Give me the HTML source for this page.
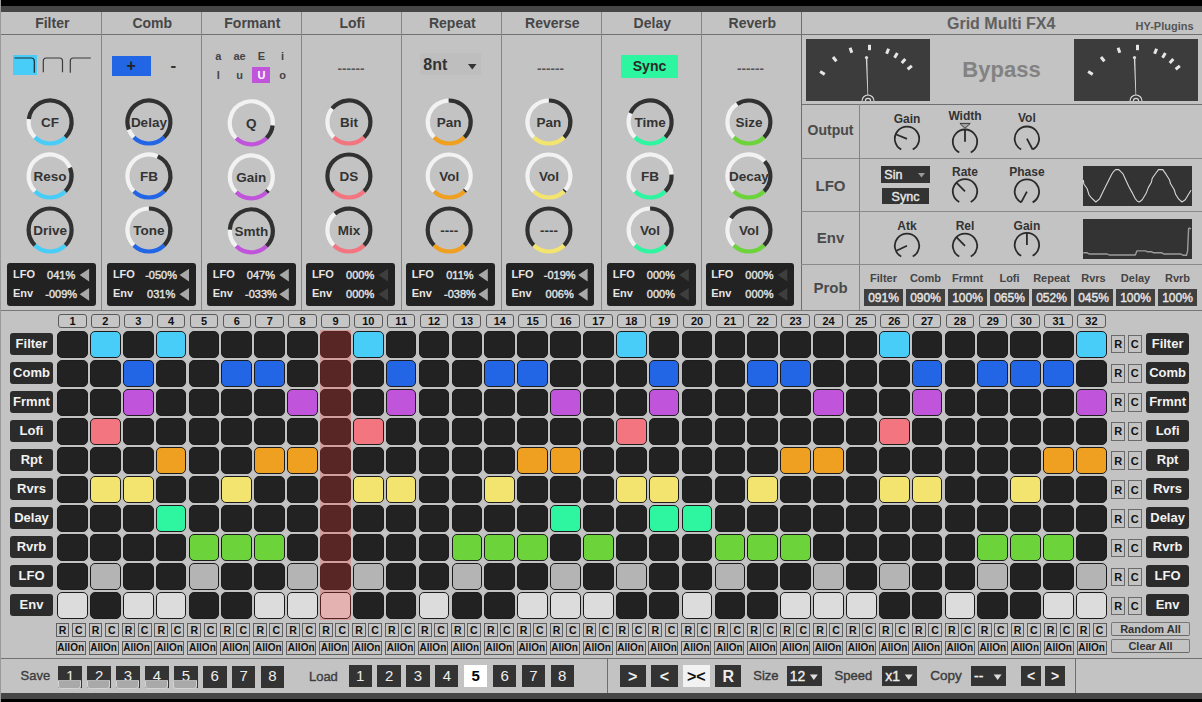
<!DOCTYPE html><html><head><meta charset="utf-8"><style>
*{box-sizing:border-box}
html,body{margin:0;padding:0}
body{width:1202px;height:702px;overflow:hidden;background:#c3c3c3;position:relative;font-family:"Liberation Sans",sans-serif;}
.a{position:absolute}
.t{position:absolute;width:0;height:0;}
.t span{position:absolute;left:0;top:0;transform:translate(-50%,-50%);white-space:pre;line-height:1;}
.tl{position:absolute;width:0;height:0;}
.tl span{position:absolute;left:0;top:0;transform:translate(0,-50%);white-space:pre;line-height:1;}
svg{position:absolute;left:0;top:0;overflow:visible}
</style></head><body><div class="a" style="left:0.00px;top:0.00px;width:1202.00px;height:6.00px;background:#000"></div>
<div class="a" style="left:0.00px;top:6.00px;width:1202.00px;height:6.00px;background:#464646"></div>
<div class="a" style="left:0.00px;top:693.00px;width:1202.00px;height:6.00px;background:#464646"></div>
<div class="a" style="left:0.00px;top:699.00px;width:1202.00px;height:3.00px;background:#000"></div>
<div class="a" style="left:0.00px;top:0.00px;width:1.00px;height:702.00px;background:#9a9a9a"></div>
<div class="a" style="left:1.00px;top:34.00px;width:1201.00px;height:1.00px;background:#717171"></div>
<div class="a" style="left:101.00px;top:12.00px;width:1.00px;height:298.00px;background:#858585"></div>
<div class="a" style="left:201.00px;top:12.00px;width:1.00px;height:298.00px;background:#858585"></div>
<div class="a" style="left:301.00px;top:12.00px;width:1.00px;height:298.00px;background:#858585"></div>
<div class="a" style="left:401.00px;top:12.00px;width:1.00px;height:298.00px;background:#858585"></div>
<div class="a" style="left:501.00px;top:12.00px;width:1.00px;height:298.00px;background:#858585"></div>
<div class="a" style="left:601.00px;top:12.00px;width:1.00px;height:298.00px;background:#858585"></div>
<div class="a" style="left:701.00px;top:12.00px;width:1.00px;height:298.00px;background:#858585"></div>
<div class="a" style="left:801.00px;top:12.00px;width:1.00px;height:298.00px;background:#6e6e6e"></div>
<div class="a" style="left:801.00px;top:104.00px;width:401.00px;height:1.00px;background:#707070"></div>
<div class="a" style="left:859.00px;top:104.00px;width:1.00px;height:206.00px;background:#858585"></div>
<div class="a" style="left:801.00px;top:158.00px;width:401.00px;height:1.00px;background:#8a8a8a"></div>
<div class="a" style="left:801.00px;top:211.00px;width:401.00px;height:1.00px;background:#8a8a8a"></div>
<div class="a" style="left:801.00px;top:264.00px;width:401.00px;height:1.00px;background:#8a8a8a"></div>
<div class="a" style="left:1.00px;top:310.00px;width:1201.00px;height:1.00px;background:#777"></div>
<div class="a" style="left:1.00px;top:658.00px;width:1201.00px;height:1.00px;background:#727272"></div>
<div class="a" style="left:607.00px;top:658.00px;width:1.00px;height:35.00px;background:#6e6e6e"></div>
<div class="a" style="left:1075.00px;top:658.00px;width:1.00px;height:35.00px;background:#6e6e6e"></div>
<div class="t" style="left:52.30px;top:22.80px;font-weight:bold;font-size:14px;color:#464646"><span>Filter</span></div>
<div class="t" style="left:152.30px;top:22.80px;font-weight:bold;font-size:14px;color:#464646"><span>Comb</span></div>
<div class="t" style="left:252.30px;top:22.80px;font-weight:bold;font-size:14px;color:#464646"><span>Formant</span></div>
<div class="t" style="left:352.30px;top:22.80px;font-weight:bold;font-size:14px;color:#464646"><span>Lofi</span></div>
<div class="t" style="left:452.30px;top:22.80px;font-weight:bold;font-size:14px;color:#464646"><span>Repeat</span></div>
<div class="t" style="left:552.30px;top:22.80px;font-weight:bold;font-size:14px;color:#464646"><span>Reverse</span></div>
<div class="t" style="left:652.30px;top:22.80px;font-weight:bold;font-size:14px;color:#464646"><span>Delay</span></div>
<div class="t" style="left:752.30px;top:22.80px;font-weight:bold;font-size:14px;color:#464646"><span>Reverb</span></div>
<svg width="1202" height="702"><path d="M65.30 137.20A21.5 21.5 0 0 1 34.90 137.20" stroke="#48cdf8" stroke-width="4.2" fill="none"/><path d="M34.90 137.20A21.5 21.5 0 0 1 28.81 119.04" stroke="#f2f2f2" stroke-width="4.2" fill="none"/><path d="M28.81 119.04A21.5 21.5 0 1 1 65.30 137.20" stroke="#313131" stroke-width="4.2" fill="none"/><path d="M65.30 191.20A21.5 21.5 0 0 1 34.90 191.20" stroke="#48cdf8" stroke-width="4.2" fill="none"/><path d="M34.90 191.20A21.5 21.5 0 1 1 69.96 167.77" stroke="#f2f2f2" stroke-width="4.2" fill="none"/><path d="M69.96 167.77A21.5 21.5 0 0 1 65.30 191.20" stroke="#313131" stroke-width="4.2" fill="none"/><path d="M65.30 245.20A21.5 21.5 0 0 1 34.90 245.20" stroke="#48cdf8" stroke-width="4.2" fill="none"/><path d="M34.90 245.20A21.5 21.5 0 1 1 65.30 245.20" stroke="#313131" stroke-width="4.2" fill="none"/><path d="M164.10 137.20A21.5 21.5 0 0 1 133.70 137.20" stroke="#2266e6" stroke-width="4.2" fill="none"/><path d="M133.70 137.20A21.5 21.5 0 0 1 128.79 129.60" stroke="#f2f2f2" stroke-width="4.2" fill="none"/><path d="M128.79 129.60A21.5 21.5 0 1 1 164.10 137.20" stroke="#313131" stroke-width="4.2" fill="none"/><path d="M164.10 191.20A21.5 21.5 0 0 1 133.70 191.20" stroke="#2266e6" stroke-width="4.2" fill="none"/><path d="M133.70 191.20A21.5 21.5 0 0 1 157.75 156.40" stroke="#f2f2f2" stroke-width="4.2" fill="none"/><path d="M157.75 156.40A21.5 21.5 0 0 1 164.10 191.20" stroke="#313131" stroke-width="4.2" fill="none"/><path d="M164.10 245.20A21.5 21.5 0 0 1 133.70 245.20" stroke="#2266e6" stroke-width="4.2" fill="none"/><path d="M133.70 245.20A21.5 21.5 0 0 1 148.90 208.50" stroke="#f2f2f2" stroke-width="4.2" fill="none"/><path d="M148.90 208.50A21.5 21.5 0 0 1 164.10 245.20" stroke="#313131" stroke-width="4.2" fill="none"/><path d="M266.50 138.10A21.5 21.5 0 0 1 236.10 138.10" stroke="#c055dc" stroke-width="4.2" fill="none"/><path d="M236.10 138.10A21.5 21.5 0 1 1 272.63 125.59" stroke="#f2f2f2" stroke-width="4.2" fill="none"/><path d="M272.63 125.59A21.5 21.5 0 0 1 266.50 138.10" stroke="#313131" stroke-width="4.2" fill="none"/><path d="M266.50 192.10A21.5 21.5 0 0 1 236.10 192.10" stroke="#c055dc" stroke-width="4.2" fill="none"/><path d="M236.10 192.10A21.5 21.5 0 1 1 268.06 190.37" stroke="#f2f2f2" stroke-width="4.2" fill="none"/><path d="M268.06 190.37A21.5 21.5 0 0 1 266.50 192.10" stroke="#313131" stroke-width="4.2" fill="none"/><path d="M266.50 246.10A21.5 21.5 0 0 1 236.10 246.10" stroke="#c055dc" stroke-width="4.2" fill="none"/><path d="M236.10 246.10A21.5 21.5 0 0 1 229.84 229.55" stroke="#f2f2f2" stroke-width="4.2" fill="none"/><path d="M229.84 229.55A21.5 21.5 0 1 1 266.50 246.10" stroke="#313131" stroke-width="4.2" fill="none"/><path d="M364.10 137.20A21.5 21.5 0 0 1 333.70 137.20" stroke="#f27580" stroke-width="4.2" fill="none"/><path d="M333.70 137.20A21.5 21.5 0 0 1 332.12 108.56" stroke="#f2f2f2" stroke-width="4.2" fill="none"/><path d="M332.12 108.56A21.5 21.5 0 1 1 364.10 137.20" stroke="#313131" stroke-width="4.2" fill="none"/><path d="M364.10 191.20A21.5 21.5 0 0 1 333.70 191.20" stroke="#f27580" stroke-width="4.2" fill="none"/><path d="M333.70 191.20A21.5 21.5 0 1 1 364.10 191.20" stroke="#313131" stroke-width="4.2" fill="none"/><path d="M364.10 245.20A21.5 21.5 0 0 1 333.70 245.20" stroke="#f27580" stroke-width="4.2" fill="none"/><path d="M333.70 245.20A21.5 21.5 0 0 1 334.94 213.65" stroke="#f2f2f2" stroke-width="4.2" fill="none"/><path d="M334.94 213.65A21.5 21.5 0 0 1 364.10 245.20" stroke="#313131" stroke-width="4.2" fill="none"/><path d="M464.40 137.20A21.5 21.5 0 0 1 434.00 137.20" stroke="#f0a020" stroke-width="4.2" fill="none"/><path d="M434.00 137.20A21.5 21.5 0 0 1 448.69 100.51" stroke="#f2f2f2" stroke-width="4.2" fill="none"/><path d="M448.69 100.51A21.5 21.5 0 0 1 464.40 137.20" stroke="#313131" stroke-width="4.2" fill="none"/><path d="M464.40 191.20A21.5 21.5 0 0 1 434.00 191.20" stroke="#f0a020" stroke-width="4.2" fill="none"/><path d="M434.00 191.20A21.5 21.5 0 1 1 465.44 190.09" stroke="#f2f2f2" stroke-width="4.2" fill="none"/><path d="M465.44 190.09A21.5 21.5 0 0 1 464.40 191.20" stroke="#313131" stroke-width="4.2" fill="none"/><path d="M464.40 245.20A21.5 21.5 0 0 1 434.00 245.20" stroke="#f0a020" stroke-width="4.2" fill="none"/><path d="M434.00 245.20A21.5 21.5 0 1 1 464.40 245.20" stroke="#313131" stroke-width="4.2" fill="none"/><path d="M564.10 137.20A21.5 21.5 0 0 1 533.70 137.20" stroke="#f2e46e" stroke-width="4.2" fill="none"/><path d="M533.70 137.20A21.5 21.5 0 0 1 548.90 100.50" stroke="#f2f2f2" stroke-width="4.2" fill="none"/><path d="M548.90 100.50A21.5 21.5 0 0 1 564.10 137.20" stroke="#313131" stroke-width="4.2" fill="none"/><path d="M564.10 191.20A21.5 21.5 0 0 1 533.70 191.20" stroke="#f2e46e" stroke-width="4.2" fill="none"/><path d="M533.70 191.20A21.5 21.5 0 1 1 565.14 190.09" stroke="#f2f2f2" stroke-width="4.2" fill="none"/><path d="M565.14 190.09A21.5 21.5 0 0 1 564.10 191.20" stroke="#313131" stroke-width="4.2" fill="none"/><path d="M564.10 245.20A21.5 21.5 0 0 1 533.70 245.20" stroke="#f2e46e" stroke-width="4.2" fill="none"/><path d="M533.70 245.20A21.5 21.5 0 1 1 564.10 245.20" stroke="#313131" stroke-width="4.2" fill="none"/><path d="M665.30 137.20A21.5 21.5 0 0 1 634.90 137.20" stroke="#2ef5a0" stroke-width="4.2" fill="none"/><path d="M634.90 137.20A21.5 21.5 0 0 1 630.48 113.21" stroke="#f2f2f2" stroke-width="4.2" fill="none"/><path d="M630.48 113.21A21.5 21.5 0 1 1 665.30 137.20" stroke="#313131" stroke-width="4.2" fill="none"/><path d="M665.30 191.20A21.5 21.5 0 0 1 634.90 191.20" stroke="#2ef5a0" stroke-width="4.2" fill="none"/><path d="M634.90 191.20A21.5 21.5 0 1 1 671.56 174.65" stroke="#f2f2f2" stroke-width="4.2" fill="none"/><path d="M671.56 174.65A21.5 21.5 0 0 1 665.30 191.20" stroke="#313131" stroke-width="4.2" fill="none"/><path d="M665.30 245.20A21.5 21.5 0 0 1 634.90 245.20" stroke="#2ef5a0" stroke-width="4.2" fill="none"/><path d="M634.90 245.20A21.5 21.5 0 0 1 650.10 208.50" stroke="#f2f2f2" stroke-width="4.2" fill="none"/><path d="M650.10 208.50A21.5 21.5 0 0 1 665.30 245.20" stroke="#313131" stroke-width="4.2" fill="none"/><path d="M764.10 137.20A21.5 21.5 0 0 1 733.70 137.20" stroke="#6cd43a" stroke-width="4.2" fill="none"/><path d="M733.70 137.20A21.5 21.5 0 0 1 737.21 103.96" stroke="#f2f2f2" stroke-width="4.2" fill="none"/><path d="M737.21 103.96A21.5 21.5 0 0 1 764.10 137.20" stroke="#313131" stroke-width="4.2" fill="none"/><path d="M764.10 191.20A21.5 21.5 0 0 1 733.70 191.20" stroke="#6cd43a" stroke-width="4.2" fill="none"/><path d="M733.70 191.20A21.5 21.5 0 1 1 764.62 161.33" stroke="#f2f2f2" stroke-width="4.2" fill="none"/><path d="M764.62 161.33A21.5 21.5 0 0 1 764.10 191.20" stroke="#313131" stroke-width="4.2" fill="none"/><path d="M764.10 245.20A21.5 21.5 0 0 1 733.70 245.20" stroke="#6cd43a" stroke-width="4.2" fill="none"/><path d="M733.70 245.20A21.5 21.5 0 0 1 730.93 218.20" stroke="#f2f2f2" stroke-width="4.2" fill="none"/><path d="M730.93 218.20A21.5 21.5 0 1 1 764.10 245.20" stroke="#313131" stroke-width="4.2" fill="none"/></svg>
<div class="t" style="left:50.10px;top:122.70px;font-weight:bold;font-size:13.5px;color:#333"><span>CF</span></div>
<div class="t" style="left:50.10px;top:176.70px;font-weight:bold;font-size:13.5px;color:#333"><span>Reso</span></div>
<div class="t" style="left:50.10px;top:230.70px;font-weight:bold;font-size:13.5px;color:#333"><span>Drive</span></div>
<div class="t" style="left:148.90px;top:122.70px;font-weight:bold;font-size:13.5px;color:#333"><span>Delay</span></div>
<div class="t" style="left:148.90px;top:176.70px;font-weight:bold;font-size:13.5px;color:#333"><span>FB</span></div>
<div class="t" style="left:148.90px;top:230.70px;font-weight:bold;font-size:13.5px;color:#333"><span>Tone</span></div>
<div class="t" style="left:251.30px;top:123.60px;font-weight:bold;font-size:13.5px;color:#333"><span>Q</span></div>
<div class="t" style="left:251.30px;top:177.60px;font-weight:bold;font-size:13.5px;color:#333"><span>Gain</span></div>
<div class="t" style="left:251.30px;top:231.60px;font-weight:bold;font-size:13.5px;color:#333"><span>Smth</span></div>
<div class="t" style="left:348.90px;top:122.70px;font-weight:bold;font-size:13.5px;color:#333"><span>Bit</span></div>
<div class="t" style="left:348.90px;top:176.70px;font-weight:bold;font-size:13.5px;color:#333"><span>DS</span></div>
<div class="t" style="left:348.90px;top:230.70px;font-weight:bold;font-size:13.5px;color:#333"><span>Mix</span></div>
<div class="t" style="left:449.20px;top:122.70px;font-weight:bold;font-size:13.5px;color:#333"><span>Pan</span></div>
<div class="t" style="left:449.20px;top:176.70px;font-weight:bold;font-size:13.5px;color:#333"><span>Vol</span></div>
<div class="t" style="left:449.20px;top:230.70px;font-weight:bold;font-size:13.5px;color:#333"><span>----</span></div>
<div class="t" style="left:548.90px;top:122.70px;font-weight:bold;font-size:13.5px;color:#333"><span>Pan</span></div>
<div class="t" style="left:548.90px;top:176.70px;font-weight:bold;font-size:13.5px;color:#333"><span>Vol</span></div>
<div class="t" style="left:548.90px;top:230.70px;font-weight:bold;font-size:13.5px;color:#333"><span>----</span></div>
<div class="t" style="left:650.10px;top:122.70px;font-weight:bold;font-size:13.5px;color:#333"><span>Time</span></div>
<div class="t" style="left:650.10px;top:176.70px;font-weight:bold;font-size:13.5px;color:#333"><span>FB</span></div>
<div class="t" style="left:650.10px;top:230.70px;font-weight:bold;font-size:13.5px;color:#333"><span>Vol</span></div>
<div class="t" style="left:748.90px;top:122.70px;font-weight:bold;font-size:13.5px;color:#333"><span>Size</span></div>
<div class="t" style="left:748.90px;top:176.70px;font-weight:bold;font-size:13.5px;color:#333"><span>Decay</span></div>
<div class="t" style="left:748.90px;top:230.70px;font-weight:bold;font-size:13.5px;color:#333"><span>Vol</span></div>
<div class="a" style="left:12.60px;top:55.30px;width:24.60px;height:20.20px;background:#48cdf8"></div>
<svg width="1202" height="702"><path d="M14.5 58 H31.3 Q34.3 58 34.3 61 V72.8" stroke="#1e2a30" stroke-width="1.2" fill="none"/><path d="M43.3 72.3 V61 Q43.3 58 46.3 58 H59.5 Q62.5 58 62.5 61 V72.3" stroke="#3c3c3c" stroke-width="1.2" fill="none"/><path d="M70.3 72.8 V61 Q70.3 58 73.3 58 H90.8" stroke="#3c3c3c" stroke-width="1.2" fill="none"/></svg>
<div class="a" style="left:111.60px;top:55.50px;width:39.00px;height:20.10px;background:#2266e6"></div>
<div class="t" style="left:131.20px;top:65.80px;font-weight:bold;font-size:16px;color:#222"><span>+</span></div>
<div class="t" style="left:173.40px;top:65.30px;font-weight:bold;font-size:17px;color:#333"><span>-</span></div>
<div class="a" style="left:252.00px;top:67.00px;width:18.30px;height:15.70px;background:#c055dc"></div>
<div class="t" style="left:218.30px;top:56.00px;font-weight:bold;font-size:11px;color:#444"><span>a</span></div>
<div class="t" style="left:239.50px;top:56.00px;font-weight:bold;font-size:11px;color:#444"><span>ae</span></div>
<div class="t" style="left:261.50px;top:56.00px;font-weight:bold;font-size:11px;color:#444"><span>E</span></div>
<div class="t" style="left:282.50px;top:56.00px;font-weight:bold;font-size:11px;color:#444"><span>i</span></div>
<div class="t" style="left:218.30px;top:74.80px;font-weight:bold;font-size:11px;color:#444"><span>I</span></div>
<div class="t" style="left:239.50px;top:74.80px;font-weight:bold;font-size:11px;color:#444"><span>u</span></div>
<div class="t" style="left:261.50px;top:74.80px;font-weight:bold;font-size:11px;color:#fff"><span>U</span></div>
<div class="t" style="left:282.50px;top:74.80px;font-weight:bold;font-size:11px;color:#444"><span>o</span></div>
<div class="t" style="left:351.00px;top:69.00px;font-weight:bold;font-size:13.5px;color:#555"><span>------</span></div>
<div class="t" style="left:550.50px;top:69.00px;font-weight:bold;font-size:13.5px;color:#555"><span>------</span></div>
<div class="t" style="left:750.50px;top:69.00px;font-weight:bold;font-size:13.5px;color:#555"><span>------</span></div>
<div class="a" style="left:420.00px;top:52.50px;width:61.00px;height:22.50px;background:#bebebe"></div>
<div class="tl" style="left:423.30px;top:64.80px;font-weight:bold;font-size:16px;color:#333"><span>8nt</span></div>
<svg width="1202" height="702"><path d="M468 64 L476.5 64 L472.25 69.5Z" fill="#333"/></svg>
<div class="a" style="left:621.30px;top:54.50px;width:56.50px;height:23.30px;background:#2ef5a0"></div>
<div class="t" style="left:649.50px;top:66.00px;font-weight:bold;font-size:14px;color:#282828"><span>Sync</span></div>
<div class="a" style="left:7.30px;top:263.00px;width:88.70px;height:42.80px;background:#222;border-radius:3px"></div>
<div class="tl" style="left:13.00px;top:274.20px;font-weight:bold;font-size:11px;color:#e6e6e6"><span>LFO</span></div>
<div class="t" style="left:61.20px;top:274.60px;font-size:11px;color:#e2e2e2;-webkit-text-stroke:0.4px #e2e2e2"><span>041%</span></div>
<svg width="1202" height="702"><path d="M79.60 275.10 L89.10 268.70 L89.10 281.50Z" fill="#a8a8a8"/></svg>
<div class="tl" style="left:13.00px;top:293.40px;font-weight:bold;font-size:11px;color:#e6e6e6"><span>Env</span></div>
<div class="t" style="left:61.20px;top:293.80px;font-size:11px;color:#e2e2e2;-webkit-text-stroke:0.4px #e2e2e2"><span>-009%</span></div>
<svg width="1202" height="702"><path d="M79.60 294.30 L89.10 287.90 L89.10 300.70Z" fill="#a8a8a8"/></svg>
<div class="a" style="left:107.20px;top:263.00px;width:88.70px;height:42.80px;background:#222;border-radius:3px"></div>
<div class="tl" style="left:112.90px;top:274.20px;font-weight:bold;font-size:11px;color:#e6e6e6"><span>LFO</span></div>
<div class="t" style="left:161.10px;top:274.60px;font-size:11px;color:#e2e2e2;-webkit-text-stroke:0.4px #e2e2e2"><span>-050%</span></div>
<svg width="1202" height="702"><path d="M179.50 275.10 L189.00 268.70 L189.00 281.50Z" fill="#a8a8a8"/></svg>
<div class="tl" style="left:112.90px;top:293.40px;font-weight:bold;font-size:11px;color:#e6e6e6"><span>Env</span></div>
<div class="t" style="left:161.10px;top:293.80px;font-size:11px;color:#e2e2e2;-webkit-text-stroke:0.4px #e2e2e2"><span>031%</span></div>
<svg width="1202" height="702"><path d="M179.50 294.30 L189.00 287.90 L189.00 300.70Z" fill="#a8a8a8"/></svg>
<div class="a" style="left:207.00px;top:263.00px;width:88.70px;height:42.80px;background:#222;border-radius:3px"></div>
<div class="tl" style="left:212.70px;top:274.20px;font-weight:bold;font-size:11px;color:#e6e6e6"><span>LFO</span></div>
<div class="t" style="left:260.90px;top:274.60px;font-size:11px;color:#e2e2e2;-webkit-text-stroke:0.4px #e2e2e2"><span>047%</span></div>
<svg width="1202" height="702"><path d="M279.30 275.10 L288.80 268.70 L288.80 281.50Z" fill="#a8a8a8"/></svg>
<div class="tl" style="left:212.70px;top:293.40px;font-weight:bold;font-size:11px;color:#e6e6e6"><span>Env</span></div>
<div class="t" style="left:260.90px;top:293.80px;font-size:11px;color:#e2e2e2;-webkit-text-stroke:0.4px #e2e2e2"><span>-033%</span></div>
<svg width="1202" height="702"><path d="M279.30 294.30 L288.80 287.90 L288.80 300.70Z" fill="#a8a8a8"/></svg>
<div class="a" style="left:306.20px;top:263.00px;width:88.70px;height:42.80px;background:#222;border-radius:3px"></div>
<div class="tl" style="left:311.90px;top:274.20px;font-weight:bold;font-size:11px;color:#e6e6e6"><span>LFO</span></div>
<div class="t" style="left:360.10px;top:274.60px;font-size:11px;color:#e2e2e2;-webkit-text-stroke:0.4px #e2e2e2"><span>000%</span></div>
<svg width="1202" height="702"><path d="M378.50 275.10 L388.00 268.70 L388.00 281.50Z" fill="#3e3e3e"/></svg>
<div class="tl" style="left:311.90px;top:293.40px;font-weight:bold;font-size:11px;color:#e6e6e6"><span>Env</span></div>
<div class="t" style="left:360.10px;top:293.80px;font-size:11px;color:#e2e2e2;-webkit-text-stroke:0.4px #e2e2e2"><span>000%</span></div>
<svg width="1202" height="702"><path d="M378.50 294.30 L388.00 287.90 L388.00 300.70Z" fill="#3e3e3e"/></svg>
<div class="a" style="left:406.00px;top:263.00px;width:88.70px;height:42.80px;background:#222;border-radius:3px"></div>
<div class="tl" style="left:411.70px;top:274.20px;font-weight:bold;font-size:11px;color:#e6e6e6"><span>LFO</span></div>
<div class="t" style="left:459.90px;top:274.60px;font-size:11px;color:#e2e2e2;-webkit-text-stroke:0.4px #e2e2e2"><span>011%</span></div>
<svg width="1202" height="702"><path d="M478.30 275.10 L487.80 268.70 L487.80 281.50Z" fill="#a8a8a8"/></svg>
<div class="tl" style="left:411.70px;top:293.40px;font-weight:bold;font-size:11px;color:#e6e6e6"><span>Env</span></div>
<div class="t" style="left:459.90px;top:293.80px;font-size:11px;color:#e2e2e2;-webkit-text-stroke:0.4px #e2e2e2"><span>-038%</span></div>
<svg width="1202" height="702"><path d="M478.30 294.30 L487.80 287.90 L487.80 300.70Z" fill="#a8a8a8"/></svg>
<div class="a" style="left:505.80px;top:263.00px;width:88.70px;height:42.80px;background:#222;border-radius:3px"></div>
<div class="tl" style="left:511.50px;top:274.20px;font-weight:bold;font-size:11px;color:#e6e6e6"><span>LFO</span></div>
<div class="t" style="left:559.70px;top:274.60px;font-size:11px;color:#e2e2e2;-webkit-text-stroke:0.4px #e2e2e2"><span>-019%</span></div>
<svg width="1202" height="702"><path d="M578.10 275.10 L587.60 268.70 L587.60 281.50Z" fill="#a8a8a8"/></svg>
<div class="tl" style="left:511.50px;top:293.40px;font-weight:bold;font-size:11px;color:#e6e6e6"><span>Env</span></div>
<div class="t" style="left:559.70px;top:293.80px;font-size:11px;color:#e2e2e2;-webkit-text-stroke:0.4px #e2e2e2"><span>006%</span></div>
<svg width="1202" height="702"><path d="M578.10 294.30 L587.60 287.90 L587.60 300.70Z" fill="#a8a8a8"/></svg>
<div class="a" style="left:607.00px;top:263.00px;width:88.70px;height:42.80px;background:#222;border-radius:3px"></div>
<div class="tl" style="left:612.70px;top:274.20px;font-weight:bold;font-size:11px;color:#e6e6e6"><span>LFO</span></div>
<div class="t" style="left:660.90px;top:274.60px;font-size:11px;color:#e2e2e2;-webkit-text-stroke:0.4px #e2e2e2"><span>000%</span></div>
<svg width="1202" height="702"><path d="M679.30 275.10 L688.80 268.70 L688.80 281.50Z" fill="#3e3e3e"/></svg>
<div class="tl" style="left:612.70px;top:293.40px;font-weight:bold;font-size:11px;color:#e6e6e6"><span>Env</span></div>
<div class="t" style="left:660.90px;top:293.80px;font-size:11px;color:#e2e2e2;-webkit-text-stroke:0.4px #e2e2e2"><span>000%</span></div>
<svg width="1202" height="702"><path d="M679.30 294.30 L688.80 287.90 L688.80 300.70Z" fill="#3e3e3e"/></svg>
<div class="a" style="left:705.50px;top:263.00px;width:88.70px;height:42.80px;background:#222;border-radius:3px"></div>
<div class="tl" style="left:711.20px;top:274.20px;font-weight:bold;font-size:11px;color:#e6e6e6"><span>LFO</span></div>
<div class="t" style="left:759.40px;top:274.60px;font-size:11px;color:#e2e2e2;-webkit-text-stroke:0.4px #e2e2e2"><span>000%</span></div>
<svg width="1202" height="702"><path d="M777.80 275.10 L787.30 268.70 L787.30 281.50Z" fill="#3e3e3e"/></svg>
<div class="tl" style="left:711.20px;top:293.40px;font-weight:bold;font-size:11px;color:#e6e6e6"><span>Env</span></div>
<div class="t" style="left:759.40px;top:293.80px;font-size:11px;color:#e2e2e2;-webkit-text-stroke:0.4px #e2e2e2"><span>000%</span></div>
<svg width="1202" height="702"><path d="M777.80 294.30 L787.30 287.90 L787.30 300.70Z" fill="#3e3e3e"/></svg>
<div class="t" style="left:1001.20px;top:23.90px;font-weight:bold;font-size:16px;color:#606060"><span>Grid Multi FX4</span></div>
<div class="t" style="left:1164.50px;top:26.00px;font-weight:bold;font-size:11px;color:#555;"><span>HY-Plugins</span></div>
<div class="a" style="left:806px;top:39px;width:124px;height:62px;background:#3c3c3c;overflow:hidden"><svg width="124" height="62"><rect x="14.93" y="31.27" width="3" height="5.4" fill="#e6e6e6" transform="rotate(-58.4 16.43 33.97)"/><rect x="27.20" y="17.43" width="3" height="5.4" fill="#e6e6e6" transform="rotate(-38.5 28.70 20.13)"/><rect x="43.44" y="8.59" width="3" height="5.4" fill="#e6e6e6" transform="rotate(-18.6 44.94 11.29)"/><rect x="62.00" y="5.80" width="3" height="5.4" fill="#e6e6e6" transform="rotate(0 63.50 8.50)"/><rect x="80.11" y="9.52" width="3" height="5.4" fill="#e6e6e6" transform="rotate(21.5 81.61 12.22)"/><rect x="88.45" y="13.68" width="3" height="5.4" fill="#e6e6e6" transform="rotate(31.5 89.95 16.38)"/><rect x="96.02" y="19.29" width="3" height="5.4" fill="#e6e6e6" transform="rotate(41.6 97.52 21.99)"/><rect x="102.25" y="25.85" width="3" height="5.4" fill="#e6e6e6" transform="rotate(51.3 103.75 28.55)"/><path d="M59.8 18.6 L61.3 18.6 L62.3 60 L61.7 60 Z" fill="#d8d8d8"/><circle cx="60.5" cy="18.6" r="1.6" fill="#ddd"/><circle cx="62" cy="62" r="6" stroke="#ddd" stroke-width="1.1" fill="#3c3c3c"/><circle cx="62" cy="62" r="2.6" stroke="#ddd" stroke-width="1.1" fill="none"/></svg></div>
<div class="a" style="left:1074px;top:39px;width:124px;height:62px;background:#3c3c3c;overflow:hidden"><svg width="124" height="62"><rect x="14.93" y="31.27" width="3" height="5.4" fill="#e6e6e6" transform="rotate(-58.4 16.43 33.97)"/><rect x="27.20" y="17.43" width="3" height="5.4" fill="#e6e6e6" transform="rotate(-38.5 28.70 20.13)"/><rect x="43.44" y="8.59" width="3" height="5.4" fill="#e6e6e6" transform="rotate(-18.6 44.94 11.29)"/><rect x="62.00" y="5.80" width="3" height="5.4" fill="#e6e6e6" transform="rotate(0 63.50 8.50)"/><rect x="80.11" y="9.52" width="3" height="5.4" fill="#e6e6e6" transform="rotate(21.5 81.61 12.22)"/><rect x="88.45" y="13.68" width="3" height="5.4" fill="#e6e6e6" transform="rotate(31.5 89.95 16.38)"/><rect x="96.02" y="19.29" width="3" height="5.4" fill="#e6e6e6" transform="rotate(41.6 97.52 21.99)"/><rect x="102.25" y="25.85" width="3" height="5.4" fill="#e6e6e6" transform="rotate(51.3 103.75 28.55)"/><path d="M59.8 18.6 L61.3 18.6 L62.3 60 L61.7 60 Z" fill="#d8d8d8"/><circle cx="60.5" cy="18.6" r="1.6" fill="#ddd"/><circle cx="62" cy="62" r="6" stroke="#ddd" stroke-width="1.1" fill="#3c3c3c"/><circle cx="62" cy="62" r="2.6" stroke="#ddd" stroke-width="1.1" fill="none"/></svg></div>
<div class="t" style="left:1001.50px;top:70.00px;font-weight:bold;font-size:22px;color:#828282"><span>Bypass</span></div>
<div class="t" style="left:830.50px;top:130.00px;font-weight:bold;font-size:14px;color:#4a4a4a"><span>Output</span></div>
<div class="t" style="left:830.50px;top:185.00px;font-weight:bold;font-size:15px;color:#4a4a4a"><span>LFO</span></div>
<div class="t" style="left:830.50px;top:237.20px;font-weight:bold;font-size:15px;color:#4a4a4a"><span>Env</span></div>
<div class="t" style="left:830.50px;top:287.30px;font-weight:bold;font-size:15px;color:#4a4a4a"><span>Prob</span></div>
<div class="t" style="left:907.00px;top:118.50px;font-weight:bold;font-size:12px;color:#333"><span>Gain</span></div>
<svg width="1202" height="702"><path d="M901.27 149.57A12.2 12.2 0 1 1 912.73 149.57" stroke="#2a2a2a" stroke-width="1.8" fill="none"/><line x1="907.00" y1="138.80" x2="895.69" y2="134.23" stroke="#2a2a2a" stroke-width="1.8"/></svg>
<div class="t" style="left:965.00px;top:115.50px;font-weight:bold;font-size:12px;color:#333"><span>Width</span></div>
<svg width="1202" height="702"><path d="M959.27 152.47A12.2 12.2 0 1 1 970.73 152.47" stroke="#2a2a2a" stroke-width="1.8" fill="none"/><line x1="965.00" y1="141.70" x2="965.00" y2="129.50" stroke="#2a2a2a" stroke-width="1.8"/></svg>
<div class="t" style="left:1026.90px;top:118.10px;font-weight:bold;font-size:12px;color:#333"><span>Vol</span></div>
<svg width="1202" height="702"><path d="M1021.17 149.47A12.2 12.2 0 1 1 1032.63 149.47" stroke="#2a2a2a" stroke-width="1.8" fill="none"/><line x1="1026.90" y1="138.70" x2="1032.63" y2="149.47" stroke="#2a2a2a" stroke-width="1.8"/></svg>
<div class="t" style="left:965.00px;top:171.80px;font-weight:bold;font-size:12px;color:#333"><span>Rate</span></div>
<svg width="1202" height="702"><path d="M959.27 202.07A12.2 12.2 0 1 1 970.73 202.07" stroke="#2a2a2a" stroke-width="1.8" fill="none"/><line x1="965.00" y1="191.30" x2="956.37" y2="182.67" stroke="#2a2a2a" stroke-width="1.8"/></svg>
<div class="t" style="left:1026.90px;top:171.50px;font-weight:bold;font-size:12px;color:#333"><span>Phase</span></div>
<svg width="1202" height="702"><path d="M1021.17 202.37A12.2 12.2 0 1 1 1032.63 202.37" stroke="#2a2a2a" stroke-width="1.8" fill="none"/><line x1="1026.90" y1="191.60" x2="1021.17" y2="202.37" stroke="#2a2a2a" stroke-width="1.8"/></svg>
<div class="t" style="left:907.00px;top:225.80px;font-weight:bold;font-size:12px;color:#333"><span>Atk</span></div>
<svg width="1202" height="702"><path d="M901.27 256.57A12.2 12.2 0 1 1 912.73 256.57" stroke="#2a2a2a" stroke-width="1.8" fill="none"/><line x1="907.00" y1="245.80" x2="895.94" y2="250.96" stroke="#2a2a2a" stroke-width="1.8"/></svg>
<div class="t" style="left:965.00px;top:225.80px;font-weight:bold;font-size:12px;color:#333"><span>Rel</span></div>
<svg width="1202" height="702"><path d="M959.27 256.57A12.2 12.2 0 1 1 970.73 256.57" stroke="#2a2a2a" stroke-width="1.8" fill="none"/><line x1="965.00" y1="245.80" x2="956.37" y2="237.17" stroke="#2a2a2a" stroke-width="1.8"/></svg>
<div class="t" style="left:1026.90px;top:225.70px;font-weight:bold;font-size:12px;color:#333"><span>Gain</span></div>
<svg width="1202" height="702"><path d="M1021.17 255.77A12.2 12.2 0 1 1 1032.63 255.77" stroke="#2a2a2a" stroke-width="1.8" fill="none"/><line x1="1026.90" y1="245.00" x2="1026.90" y2="232.80" stroke="#2a2a2a" stroke-width="1.8"/></svg>
<svg width="1202" height="702"><path d="M959.9 123.4 L970.2 123.4 L965 128.3Z" fill="#a4a4a4" stroke="#2a2a2a" stroke-width="0.9" stroke-linejoin="miter"/></svg>
<div class="a" style="left:881.00px;top:166.00px;width:49.00px;height:16.80px;background:#333"></div>
<div class="tl" style="left:884.30px;top:175.00px;font-size:12.5px;color:#e8e8e8;-webkit-text-stroke:0.4px #e8e8e8"><span>Sin</span></div>
<svg width="1202" height="702"><path d="M918 173 L925 173 L921.5 177.5Z" fill="#999"/></svg>
<div class="a" style="left:881.70px;top:187.80px;width:47.30px;height:16.70px;background:#333"></div>
<div class="t" style="left:905.50px;top:196.80px;font-size:12.5px;color:#e8e8e8;-webkit-text-stroke:0.4px #e8e8e8"><span>Sync</span></div>
<div class="a" style="left:1083.00px;top:166.00px;width:109.00px;height:40.00px;background:#333"></div>
<svg width="1202" height="702"><polyline points="1083.35,180.18 1083.83,184.01 1087.18,188.79 1089.09,195.01 1091.48,197.89 1095.79,202.00 1099.62,198.84 1102.97,191.67 1106.32,184.97 1108.71,180.18 1111.58,174.44 1113.49,171.57 1115.60,169.66 1118.76,169.66 1123.06,173.96 1124.98,178.27 1128.80,186.40 1132.15,192.62 1135.02,198.36 1137.42,201.23 1139.33,202.00 1142.20,199.80 1146.03,193.58 1148.42,187.36 1151.29,182.57 1152.25,178.27 1155.60,173.48 1158.47,169.66 1162.78,169.66 1166.12,174.44 1169.47,179.70 1170.43,183.53 1174.26,189.75 1175.69,194.54 1178.56,198.84 1181.91,202.00 1185.26,199.80 1188.13,195.01 1191.00,190.23" stroke="#d8d8d8" stroke-width="1.1" fill="none" stroke-linejoin="round"/></svg>
<div class="a" style="left:1083.00px;top:219.00px;width:109.00px;height:40.00px;background:#333"></div>
<svg width="1202" height="702"><polyline points="1083.3,252.8 1087.2,252.8 1089.1,254 1107.3,254 1109.2,255 1135.3,255 1136.9,250.9 1145.5,250.9 1147.5,251.8 1151.8,251.8 1153.7,252.8 1161.8,252.8 1163.7,254 1181,254 1182.9,255.2 1186.5,255.2 1187.6,251 1188.6,228.6 1189.5,228 1191,229" stroke="#9c9c9c" stroke-width="1.4" fill="none" stroke-linejoin="round"/></svg>
<div class="t" style="left:883.50px;top:278.30px;font-weight:bold;font-size:11px;color:#444"><span>Filter</span></div>
<div class="a" style="left:864.00px;top:289.00px;width:39.00px;height:17.00px;background:#404040"></div>
<div class="t" style="left:883.50px;top:298.10px;font-size:12px;color:#e6e6e6;-webkit-text-stroke:0.4px #e6e6e6"><span>091%</span></div>
<div class="t" style="left:925.50px;top:278.30px;font-weight:bold;font-size:11px;color:#444"><span>Comb</span></div>
<div class="a" style="left:906.00px;top:289.00px;width:39.00px;height:17.00px;background:#404040"></div>
<div class="t" style="left:925.50px;top:298.10px;font-size:12px;color:#e6e6e6;-webkit-text-stroke:0.4px #e6e6e6"><span>090%</span></div>
<div class="t" style="left:967.50px;top:278.30px;font-weight:bold;font-size:11px;color:#444"><span>Frmnt</span></div>
<div class="a" style="left:948.00px;top:289.00px;width:39.00px;height:17.00px;background:#404040"></div>
<div class="t" style="left:967.50px;top:298.10px;font-size:12px;color:#e6e6e6;-webkit-text-stroke:0.4px #e6e6e6"><span>100%</span></div>
<div class="t" style="left:1009.50px;top:278.30px;font-weight:bold;font-size:11px;color:#444"><span>Lofi</span></div>
<div class="a" style="left:990.00px;top:289.00px;width:39.00px;height:17.00px;background:#404040"></div>
<div class="t" style="left:1009.50px;top:298.10px;font-size:12px;color:#e6e6e6;-webkit-text-stroke:0.4px #e6e6e6"><span>065%</span></div>
<div class="t" style="left:1051.50px;top:278.30px;font-weight:bold;font-size:11px;color:#444"><span>Repeat</span></div>
<div class="a" style="left:1032.00px;top:289.00px;width:39.00px;height:17.00px;background:#404040"></div>
<div class="t" style="left:1051.50px;top:298.10px;font-size:12px;color:#e6e6e6;-webkit-text-stroke:0.4px #e6e6e6"><span>052%</span></div>
<div class="t" style="left:1093.50px;top:278.30px;font-weight:bold;font-size:11px;color:#444"><span>Rvrs</span></div>
<div class="a" style="left:1074.00px;top:289.00px;width:39.00px;height:17.00px;background:#404040"></div>
<div class="t" style="left:1093.50px;top:298.10px;font-size:12px;color:#e6e6e6;-webkit-text-stroke:0.4px #e6e6e6"><span>045%</span></div>
<div class="t" style="left:1135.50px;top:278.30px;font-weight:bold;font-size:11px;color:#444"><span>Delay</span></div>
<div class="a" style="left:1116.00px;top:289.00px;width:39.00px;height:17.00px;background:#404040"></div>
<div class="t" style="left:1135.50px;top:298.10px;font-size:12px;color:#e6e6e6;-webkit-text-stroke:0.4px #e6e6e6"><span>100%</span></div>
<div class="t" style="left:1177.50px;top:278.30px;font-weight:bold;font-size:11px;color:#444"><span>Rvrb</span></div>
<div class="a" style="left:1158.00px;top:289.00px;width:39.00px;height:17.00px;background:#404040"></div>
<div class="t" style="left:1177.50px;top:298.10px;font-size:12px;color:#e6e6e6;-webkit-text-stroke:0.4px #e6e6e6"><span>100%</span></div>
<div class="a" style="left:58.20px;top:314.30px;width:28.60px;height:13.30px;border:1px solid #5a5a5a;border-radius:3px;background:#c6c6c6"></div>
<div class="t" style="left:72.50px;top:321.10px;font-weight:bold;font-size:11px;color:#111"><span>1</span></div>
<div class="a" style="left:91.07px;top:314.30px;width:28.60px;height:13.30px;border:1px solid #5a5a5a;border-radius:3px;background:#c6c6c6"></div>
<div class="t" style="left:105.37px;top:321.10px;font-weight:bold;font-size:11px;color:#111"><span>2</span></div>
<div class="a" style="left:123.94px;top:314.30px;width:28.60px;height:13.30px;border:1px solid #5a5a5a;border-radius:3px;background:#c6c6c6"></div>
<div class="t" style="left:138.24px;top:321.10px;font-weight:bold;font-size:11px;color:#111"><span>3</span></div>
<div class="a" style="left:156.81px;top:314.30px;width:28.60px;height:13.30px;border:1px solid #5a5a5a;border-radius:3px;background:#c6c6c6"></div>
<div class="t" style="left:171.11px;top:321.10px;font-weight:bold;font-size:11px;color:#111"><span>4</span></div>
<div class="a" style="left:189.68px;top:314.30px;width:28.60px;height:13.30px;border:1px solid #5a5a5a;border-radius:3px;background:#c6c6c6"></div>
<div class="t" style="left:203.98px;top:321.10px;font-weight:bold;font-size:11px;color:#111"><span>5</span></div>
<div class="a" style="left:222.55px;top:314.30px;width:28.60px;height:13.30px;border:1px solid #5a5a5a;border-radius:3px;background:#c6c6c6"></div>
<div class="t" style="left:236.85px;top:321.10px;font-weight:bold;font-size:11px;color:#111"><span>6</span></div>
<div class="a" style="left:255.42px;top:314.30px;width:28.60px;height:13.30px;border:1px solid #5a5a5a;border-radius:3px;background:#c6c6c6"></div>
<div class="t" style="left:269.72px;top:321.10px;font-weight:bold;font-size:11px;color:#111"><span>7</span></div>
<div class="a" style="left:288.29px;top:314.30px;width:28.60px;height:13.30px;border:1px solid #5a5a5a;border-radius:3px;background:#c6c6c6"></div>
<div class="t" style="left:302.59px;top:321.10px;font-weight:bold;font-size:11px;color:#111"><span>8</span></div>
<div class="a" style="left:321.16px;top:314.30px;width:28.60px;height:13.30px;border:1px solid #5a5a5a;border-radius:3px;background:#c6c6c6"></div>
<div class="t" style="left:335.46px;top:321.10px;font-weight:bold;font-size:11px;color:#111"><span>9</span></div>
<div class="a" style="left:354.03px;top:314.30px;width:28.60px;height:13.30px;border:1px solid #5a5a5a;border-radius:3px;background:#c6c6c6"></div>
<div class="t" style="left:368.33px;top:321.10px;font-weight:bold;font-size:11px;color:#111"><span>10</span></div>
<div class="a" style="left:386.90px;top:314.30px;width:28.60px;height:13.30px;border:1px solid #5a5a5a;border-radius:3px;background:#c6c6c6"></div>
<div class="t" style="left:401.20px;top:321.10px;font-weight:bold;font-size:11px;color:#111"><span>11</span></div>
<div class="a" style="left:419.77px;top:314.30px;width:28.60px;height:13.30px;border:1px solid #5a5a5a;border-radius:3px;background:#c6c6c6"></div>
<div class="t" style="left:434.07px;top:321.10px;font-weight:bold;font-size:11px;color:#111"><span>12</span></div>
<div class="a" style="left:452.64px;top:314.30px;width:28.60px;height:13.30px;border:1px solid #5a5a5a;border-radius:3px;background:#c6c6c6"></div>
<div class="t" style="left:466.94px;top:321.10px;font-weight:bold;font-size:11px;color:#111"><span>13</span></div>
<div class="a" style="left:485.51px;top:314.30px;width:28.60px;height:13.30px;border:1px solid #5a5a5a;border-radius:3px;background:#c6c6c6"></div>
<div class="t" style="left:499.81px;top:321.10px;font-weight:bold;font-size:11px;color:#111"><span>14</span></div>
<div class="a" style="left:518.38px;top:314.30px;width:28.60px;height:13.30px;border:1px solid #5a5a5a;border-radius:3px;background:#c6c6c6"></div>
<div class="t" style="left:532.68px;top:321.10px;font-weight:bold;font-size:11px;color:#111"><span>15</span></div>
<div class="a" style="left:551.25px;top:314.30px;width:28.60px;height:13.30px;border:1px solid #5a5a5a;border-radius:3px;background:#c6c6c6"></div>
<div class="t" style="left:565.55px;top:321.10px;font-weight:bold;font-size:11px;color:#111"><span>16</span></div>
<div class="a" style="left:584.12px;top:314.30px;width:28.60px;height:13.30px;border:1px solid #5a5a5a;border-radius:3px;background:#c6c6c6"></div>
<div class="t" style="left:598.42px;top:321.10px;font-weight:bold;font-size:11px;color:#111"><span>17</span></div>
<div class="a" style="left:616.99px;top:314.30px;width:28.60px;height:13.30px;border:1px solid #5a5a5a;border-radius:3px;background:#c6c6c6"></div>
<div class="t" style="left:631.29px;top:321.10px;font-weight:bold;font-size:11px;color:#111"><span>18</span></div>
<div class="a" style="left:649.86px;top:314.30px;width:28.60px;height:13.30px;border:1px solid #5a5a5a;border-radius:3px;background:#c6c6c6"></div>
<div class="t" style="left:664.16px;top:321.10px;font-weight:bold;font-size:11px;color:#111"><span>19</span></div>
<div class="a" style="left:682.73px;top:314.30px;width:28.60px;height:13.30px;border:1px solid #5a5a5a;border-radius:3px;background:#c6c6c6"></div>
<div class="t" style="left:697.03px;top:321.10px;font-weight:bold;font-size:11px;color:#111"><span>20</span></div>
<div class="a" style="left:715.60px;top:314.30px;width:28.60px;height:13.30px;border:1px solid #5a5a5a;border-radius:3px;background:#c6c6c6"></div>
<div class="t" style="left:729.90px;top:321.10px;font-weight:bold;font-size:11px;color:#111"><span>21</span></div>
<div class="a" style="left:748.47px;top:314.30px;width:28.60px;height:13.30px;border:1px solid #5a5a5a;border-radius:3px;background:#c6c6c6"></div>
<div class="t" style="left:762.77px;top:321.10px;font-weight:bold;font-size:11px;color:#111"><span>22</span></div>
<div class="a" style="left:781.34px;top:314.30px;width:28.60px;height:13.30px;border:1px solid #5a5a5a;border-radius:3px;background:#c6c6c6"></div>
<div class="t" style="left:795.64px;top:321.10px;font-weight:bold;font-size:11px;color:#111"><span>23</span></div>
<div class="a" style="left:814.21px;top:314.30px;width:28.60px;height:13.30px;border:1px solid #5a5a5a;border-radius:3px;background:#c6c6c6"></div>
<div class="t" style="left:828.51px;top:321.10px;font-weight:bold;font-size:11px;color:#111"><span>24</span></div>
<div class="a" style="left:847.08px;top:314.30px;width:28.60px;height:13.30px;border:1px solid #5a5a5a;border-radius:3px;background:#c6c6c6"></div>
<div class="t" style="left:861.38px;top:321.10px;font-weight:bold;font-size:11px;color:#111"><span>25</span></div>
<div class="a" style="left:879.95px;top:314.30px;width:28.60px;height:13.30px;border:1px solid #5a5a5a;border-radius:3px;background:#c6c6c6"></div>
<div class="t" style="left:894.25px;top:321.10px;font-weight:bold;font-size:11px;color:#111"><span>26</span></div>
<div class="a" style="left:912.82px;top:314.30px;width:28.60px;height:13.30px;border:1px solid #5a5a5a;border-radius:3px;background:#c6c6c6"></div>
<div class="t" style="left:927.12px;top:321.10px;font-weight:bold;font-size:11px;color:#111"><span>27</span></div>
<div class="a" style="left:945.69px;top:314.30px;width:28.60px;height:13.30px;border:1px solid #5a5a5a;border-radius:3px;background:#c6c6c6"></div>
<div class="t" style="left:959.99px;top:321.10px;font-weight:bold;font-size:11px;color:#111"><span>28</span></div>
<div class="a" style="left:978.56px;top:314.30px;width:28.60px;height:13.30px;border:1px solid #5a5a5a;border-radius:3px;background:#c6c6c6"></div>
<div class="t" style="left:992.86px;top:321.10px;font-weight:bold;font-size:11px;color:#111"><span>29</span></div>
<div class="a" style="left:1011.43px;top:314.30px;width:28.60px;height:13.30px;border:1px solid #5a5a5a;border-radius:3px;background:#c6c6c6"></div>
<div class="t" style="left:1025.73px;top:321.10px;font-weight:bold;font-size:11px;color:#111"><span>30</span></div>
<div class="a" style="left:1044.30px;top:314.30px;width:28.60px;height:13.30px;border:1px solid #5a5a5a;border-radius:3px;background:#c6c6c6"></div>
<div class="t" style="left:1058.60px;top:321.10px;font-weight:bold;font-size:11px;color:#111"><span>31</span></div>
<div class="a" style="left:1077.17px;top:314.30px;width:28.60px;height:13.30px;border:1px solid #5a5a5a;border-radius:3px;background:#c6c6c6"></div>
<div class="t" style="left:1091.47px;top:321.10px;font-weight:bold;font-size:11px;color:#111"><span>32</span></div>
<div class="a" style="left:57.10px;top:331.00px;width:30.70px;height:26.60px;background:#222;border:1px solid #1c1c1c;border-radius:5px"></div>
<div class="a" style="left:89.97px;top:331.00px;width:30.70px;height:26.60px;background:#48cdf8;border:1px solid #1c1c1c;border-radius:5px"></div>
<div class="a" style="left:122.84px;top:331.00px;width:30.70px;height:26.60px;background:#222;border:1px solid #1c1c1c;border-radius:5px"></div>
<div class="a" style="left:155.71px;top:331.00px;width:30.70px;height:26.60px;background:#48cdf8;border:1px solid #1c1c1c;border-radius:5px"></div>
<div class="a" style="left:188.58px;top:331.00px;width:30.70px;height:26.60px;background:#222;border:1px solid #1c1c1c;border-radius:5px"></div>
<div class="a" style="left:221.45px;top:331.00px;width:30.70px;height:26.60px;background:#222;border:1px solid #1c1c1c;border-radius:5px"></div>
<div class="a" style="left:254.32px;top:331.00px;width:30.70px;height:26.60px;background:#222;border:1px solid #1c1c1c;border-radius:5px"></div>
<div class="a" style="left:287.19px;top:331.00px;width:30.70px;height:26.60px;background:#222;border:1px solid #1c1c1c;border-radius:5px"></div>
<div class="a" style="left:320.06px;top:331.00px;width:30.70px;height:26.60px;background:#222;border:1px solid #1c1c1c;border-radius:5px"></div>
<div class="a" style="left:352.93px;top:331.00px;width:30.70px;height:26.60px;background:#48cdf8;border:1px solid #1c1c1c;border-radius:5px"></div>
<div class="a" style="left:385.80px;top:331.00px;width:30.70px;height:26.60px;background:#222;border:1px solid #1c1c1c;border-radius:5px"></div>
<div class="a" style="left:418.67px;top:331.00px;width:30.70px;height:26.60px;background:#222;border:1px solid #1c1c1c;border-radius:5px"></div>
<div class="a" style="left:451.54px;top:331.00px;width:30.70px;height:26.60px;background:#222;border:1px solid #1c1c1c;border-radius:5px"></div>
<div class="a" style="left:484.41px;top:331.00px;width:30.70px;height:26.60px;background:#222;border:1px solid #1c1c1c;border-radius:5px"></div>
<div class="a" style="left:517.28px;top:331.00px;width:30.70px;height:26.60px;background:#222;border:1px solid #1c1c1c;border-radius:5px"></div>
<div class="a" style="left:550.15px;top:331.00px;width:30.70px;height:26.60px;background:#222;border:1px solid #1c1c1c;border-radius:5px"></div>
<div class="a" style="left:583.02px;top:331.00px;width:30.70px;height:26.60px;background:#222;border:1px solid #1c1c1c;border-radius:5px"></div>
<div class="a" style="left:615.89px;top:331.00px;width:30.70px;height:26.60px;background:#48cdf8;border:1px solid #1c1c1c;border-radius:5px"></div>
<div class="a" style="left:648.76px;top:331.00px;width:30.70px;height:26.60px;background:#222;border:1px solid #1c1c1c;border-radius:5px"></div>
<div class="a" style="left:681.63px;top:331.00px;width:30.70px;height:26.60px;background:#222;border:1px solid #1c1c1c;border-radius:5px"></div>
<div class="a" style="left:714.50px;top:331.00px;width:30.70px;height:26.60px;background:#222;border:1px solid #1c1c1c;border-radius:5px"></div>
<div class="a" style="left:747.37px;top:331.00px;width:30.70px;height:26.60px;background:#222;border:1px solid #1c1c1c;border-radius:5px"></div>
<div class="a" style="left:780.24px;top:331.00px;width:30.70px;height:26.60px;background:#222;border:1px solid #1c1c1c;border-radius:5px"></div>
<div class="a" style="left:813.11px;top:331.00px;width:30.70px;height:26.60px;background:#222;border:1px solid #1c1c1c;border-radius:5px"></div>
<div class="a" style="left:845.98px;top:331.00px;width:30.70px;height:26.60px;background:#222;border:1px solid #1c1c1c;border-radius:5px"></div>
<div class="a" style="left:878.85px;top:331.00px;width:30.70px;height:26.60px;background:#48cdf8;border:1px solid #1c1c1c;border-radius:5px"></div>
<div class="a" style="left:911.72px;top:331.00px;width:30.70px;height:26.60px;background:#222;border:1px solid #1c1c1c;border-radius:5px"></div>
<div class="a" style="left:944.59px;top:331.00px;width:30.70px;height:26.60px;background:#222;border:1px solid #1c1c1c;border-radius:5px"></div>
<div class="a" style="left:977.46px;top:331.00px;width:30.70px;height:26.60px;background:#222;border:1px solid #1c1c1c;border-radius:5px"></div>
<div class="a" style="left:1010.33px;top:331.00px;width:30.70px;height:26.60px;background:#222;border:1px solid #1c1c1c;border-radius:5px"></div>
<div class="a" style="left:1043.20px;top:331.00px;width:30.70px;height:26.60px;background:#222;border:1px solid #1c1c1c;border-radius:5px"></div>
<div class="a" style="left:1076.07px;top:331.00px;width:30.70px;height:26.60px;background:#48cdf8;border:1px solid #1c1c1c;border-radius:5px"></div>
<div class="a" style="left:10.00px;top:333.00px;width:43.00px;height:22.00px;background:#2b2b2b;border-radius:3px"></div>
<div class="t" style="left:31.50px;top:343.10px;font-weight:bold;font-size:13px;color:#f2f2f2"><span>Filter</span></div>
<div class="a" style="left:1111.20px;top:335.30px;width:14.10px;height:18.20px;border:1px solid #6a6a6a;background:#c3c3c3"></div>
<div class="t" style="left:1118.30px;top:344.40px;font-weight:bold;font-size:11px;color:#111"><span>R</span></div>
<div class="a" style="left:1127.60px;top:335.30px;width:14.20px;height:18.20px;border:1px solid #6a6a6a;background:#c3c3c3"></div>
<div class="t" style="left:1134.70px;top:344.40px;font-weight:bold;font-size:11px;color:#111"><span>C</span></div>
<div class="a" style="left:1146.20px;top:333.00px;width:42.80px;height:21.60px;background:#2b2b2b;border-radius:3px"></div>
<div class="t" style="left:1167.60px;top:343.10px;font-weight:bold;font-size:13px;color:#f2f2f2"><span>Filter</span></div>
<div class="a" style="left:57.10px;top:360.03px;width:30.70px;height:26.60px;background:#222;border:1px solid #1c1c1c;border-radius:5px"></div>
<div class="a" style="left:89.97px;top:360.03px;width:30.70px;height:26.60px;background:#222;border:1px solid #1c1c1c;border-radius:5px"></div>
<div class="a" style="left:122.84px;top:360.03px;width:30.70px;height:26.60px;background:#2266e6;border:1px solid #1c1c1c;border-radius:5px"></div>
<div class="a" style="left:155.71px;top:360.03px;width:30.70px;height:26.60px;background:#222;border:1px solid #1c1c1c;border-radius:5px"></div>
<div class="a" style="left:188.58px;top:360.03px;width:30.70px;height:26.60px;background:#222;border:1px solid #1c1c1c;border-radius:5px"></div>
<div class="a" style="left:221.45px;top:360.03px;width:30.70px;height:26.60px;background:#2266e6;border:1px solid #1c1c1c;border-radius:5px"></div>
<div class="a" style="left:254.32px;top:360.03px;width:30.70px;height:26.60px;background:#2266e6;border:1px solid #1c1c1c;border-radius:5px"></div>
<div class="a" style="left:287.19px;top:360.03px;width:30.70px;height:26.60px;background:#222;border:1px solid #1c1c1c;border-radius:5px"></div>
<div class="a" style="left:320.06px;top:360.03px;width:30.70px;height:26.60px;background:#222;border:1px solid #1c1c1c;border-radius:5px"></div>
<div class="a" style="left:352.93px;top:360.03px;width:30.70px;height:26.60px;background:#222;border:1px solid #1c1c1c;border-radius:5px"></div>
<div class="a" style="left:385.80px;top:360.03px;width:30.70px;height:26.60px;background:#2266e6;border:1px solid #1c1c1c;border-radius:5px"></div>
<div class="a" style="left:418.67px;top:360.03px;width:30.70px;height:26.60px;background:#222;border:1px solid #1c1c1c;border-radius:5px"></div>
<div class="a" style="left:451.54px;top:360.03px;width:30.70px;height:26.60px;background:#222;border:1px solid #1c1c1c;border-radius:5px"></div>
<div class="a" style="left:484.41px;top:360.03px;width:30.70px;height:26.60px;background:#2266e6;border:1px solid #1c1c1c;border-radius:5px"></div>
<div class="a" style="left:517.28px;top:360.03px;width:30.70px;height:26.60px;background:#2266e6;border:1px solid #1c1c1c;border-radius:5px"></div>
<div class="a" style="left:550.15px;top:360.03px;width:30.70px;height:26.60px;background:#222;border:1px solid #1c1c1c;border-radius:5px"></div>
<div class="a" style="left:583.02px;top:360.03px;width:30.70px;height:26.60px;background:#222;border:1px solid #1c1c1c;border-radius:5px"></div>
<div class="a" style="left:615.89px;top:360.03px;width:30.70px;height:26.60px;background:#222;border:1px solid #1c1c1c;border-radius:5px"></div>
<div class="a" style="left:648.76px;top:360.03px;width:30.70px;height:26.60px;background:#2266e6;border:1px solid #1c1c1c;border-radius:5px"></div>
<div class="a" style="left:681.63px;top:360.03px;width:30.70px;height:26.60px;background:#222;border:1px solid #1c1c1c;border-radius:5px"></div>
<div class="a" style="left:714.50px;top:360.03px;width:30.70px;height:26.60px;background:#222;border:1px solid #1c1c1c;border-radius:5px"></div>
<div class="a" style="left:747.37px;top:360.03px;width:30.70px;height:26.60px;background:#2266e6;border:1px solid #1c1c1c;border-radius:5px"></div>
<div class="a" style="left:780.24px;top:360.03px;width:30.70px;height:26.60px;background:#2266e6;border:1px solid #1c1c1c;border-radius:5px"></div>
<div class="a" style="left:813.11px;top:360.03px;width:30.70px;height:26.60px;background:#222;border:1px solid #1c1c1c;border-radius:5px"></div>
<div class="a" style="left:845.98px;top:360.03px;width:30.70px;height:26.60px;background:#222;border:1px solid #1c1c1c;border-radius:5px"></div>
<div class="a" style="left:878.85px;top:360.03px;width:30.70px;height:26.60px;background:#222;border:1px solid #1c1c1c;border-radius:5px"></div>
<div class="a" style="left:911.72px;top:360.03px;width:30.70px;height:26.60px;background:#2266e6;border:1px solid #1c1c1c;border-radius:5px"></div>
<div class="a" style="left:944.59px;top:360.03px;width:30.70px;height:26.60px;background:#222;border:1px solid #1c1c1c;border-radius:5px"></div>
<div class="a" style="left:977.46px;top:360.03px;width:30.70px;height:26.60px;background:#2266e6;border:1px solid #1c1c1c;border-radius:5px"></div>
<div class="a" style="left:1010.33px;top:360.03px;width:30.70px;height:26.60px;background:#2266e6;border:1px solid #1c1c1c;border-radius:5px"></div>
<div class="a" style="left:1043.20px;top:360.03px;width:30.70px;height:26.60px;background:#2266e6;border:1px solid #1c1c1c;border-radius:5px"></div>
<div class="a" style="left:1076.07px;top:360.03px;width:30.70px;height:26.60px;background:#222;border:1px solid #1c1c1c;border-radius:5px"></div>
<div class="a" style="left:10.00px;top:362.03px;width:43.00px;height:22.00px;background:#2b2b2b;border-radius:3px"></div>
<div class="t" style="left:31.50px;top:372.13px;font-weight:bold;font-size:13px;color:#f2f2f2"><span>Comb</span></div>
<div class="a" style="left:1111.20px;top:364.33px;width:14.10px;height:18.20px;border:1px solid #6a6a6a;background:#c3c3c3"></div>
<div class="t" style="left:1118.30px;top:373.43px;font-weight:bold;font-size:11px;color:#111"><span>R</span></div>
<div class="a" style="left:1127.60px;top:364.33px;width:14.20px;height:18.20px;border:1px solid #6a6a6a;background:#c3c3c3"></div>
<div class="t" style="left:1134.70px;top:373.43px;font-weight:bold;font-size:11px;color:#111"><span>C</span></div>
<div class="a" style="left:1146.20px;top:362.03px;width:42.80px;height:21.60px;background:#2b2b2b;border-radius:3px"></div>
<div class="t" style="left:1167.60px;top:372.13px;font-weight:bold;font-size:13px;color:#f2f2f2"><span>Comb</span></div>
<div class="a" style="left:57.10px;top:389.06px;width:30.70px;height:26.60px;background:#222;border:1px solid #1c1c1c;border-radius:5px"></div>
<div class="a" style="left:89.97px;top:389.06px;width:30.70px;height:26.60px;background:#222;border:1px solid #1c1c1c;border-radius:5px"></div>
<div class="a" style="left:122.84px;top:389.06px;width:30.70px;height:26.60px;background:#c055dc;border:1px solid #1c1c1c;border-radius:5px"></div>
<div class="a" style="left:155.71px;top:389.06px;width:30.70px;height:26.60px;background:#222;border:1px solid #1c1c1c;border-radius:5px"></div>
<div class="a" style="left:188.58px;top:389.06px;width:30.70px;height:26.60px;background:#222;border:1px solid #1c1c1c;border-radius:5px"></div>
<div class="a" style="left:221.45px;top:389.06px;width:30.70px;height:26.60px;background:#222;border:1px solid #1c1c1c;border-radius:5px"></div>
<div class="a" style="left:254.32px;top:389.06px;width:30.70px;height:26.60px;background:#222;border:1px solid #1c1c1c;border-radius:5px"></div>
<div class="a" style="left:287.19px;top:389.06px;width:30.70px;height:26.60px;background:#c055dc;border:1px solid #1c1c1c;border-radius:5px"></div>
<div class="a" style="left:320.06px;top:389.06px;width:30.70px;height:26.60px;background:#222;border:1px solid #1c1c1c;border-radius:5px"></div>
<div class="a" style="left:352.93px;top:389.06px;width:30.70px;height:26.60px;background:#222;border:1px solid #1c1c1c;border-radius:5px"></div>
<div class="a" style="left:385.80px;top:389.06px;width:30.70px;height:26.60px;background:#c055dc;border:1px solid #1c1c1c;border-radius:5px"></div>
<div class="a" style="left:418.67px;top:389.06px;width:30.70px;height:26.60px;background:#222;border:1px solid #1c1c1c;border-radius:5px"></div>
<div class="a" style="left:451.54px;top:389.06px;width:30.70px;height:26.60px;background:#222;border:1px solid #1c1c1c;border-radius:5px"></div>
<div class="a" style="left:484.41px;top:389.06px;width:30.70px;height:26.60px;background:#222;border:1px solid #1c1c1c;border-radius:5px"></div>
<div class="a" style="left:517.28px;top:389.06px;width:30.70px;height:26.60px;background:#222;border:1px solid #1c1c1c;border-radius:5px"></div>
<div class="a" style="left:550.15px;top:389.06px;width:30.70px;height:26.60px;background:#c055dc;border:1px solid #1c1c1c;border-radius:5px"></div>
<div class="a" style="left:583.02px;top:389.06px;width:30.70px;height:26.60px;background:#222;border:1px solid #1c1c1c;border-radius:5px"></div>
<div class="a" style="left:615.89px;top:389.06px;width:30.70px;height:26.60px;background:#222;border:1px solid #1c1c1c;border-radius:5px"></div>
<div class="a" style="left:648.76px;top:389.06px;width:30.70px;height:26.60px;background:#c055dc;border:1px solid #1c1c1c;border-radius:5px"></div>
<div class="a" style="left:681.63px;top:389.06px;width:30.70px;height:26.60px;background:#222;border:1px solid #1c1c1c;border-radius:5px"></div>
<div class="a" style="left:714.50px;top:389.06px;width:30.70px;height:26.60px;background:#222;border:1px solid #1c1c1c;border-radius:5px"></div>
<div class="a" style="left:747.37px;top:389.06px;width:30.70px;height:26.60px;background:#222;border:1px solid #1c1c1c;border-radius:5px"></div>
<div class="a" style="left:780.24px;top:389.06px;width:30.70px;height:26.60px;background:#222;border:1px solid #1c1c1c;border-radius:5px"></div>
<div class="a" style="left:813.11px;top:389.06px;width:30.70px;height:26.60px;background:#c055dc;border:1px solid #1c1c1c;border-radius:5px"></div>
<div class="a" style="left:845.98px;top:389.06px;width:30.70px;height:26.60px;background:#222;border:1px solid #1c1c1c;border-radius:5px"></div>
<div class="a" style="left:878.85px;top:389.06px;width:30.70px;height:26.60px;background:#222;border:1px solid #1c1c1c;border-radius:5px"></div>
<div class="a" style="left:911.72px;top:389.06px;width:30.70px;height:26.60px;background:#c055dc;border:1px solid #1c1c1c;border-radius:5px"></div>
<div class="a" style="left:944.59px;top:389.06px;width:30.70px;height:26.60px;background:#222;border:1px solid #1c1c1c;border-radius:5px"></div>
<div class="a" style="left:977.46px;top:389.06px;width:30.70px;height:26.60px;background:#222;border:1px solid #1c1c1c;border-radius:5px"></div>
<div class="a" style="left:1010.33px;top:389.06px;width:30.70px;height:26.60px;background:#222;border:1px solid #1c1c1c;border-radius:5px"></div>
<div class="a" style="left:1043.20px;top:389.06px;width:30.70px;height:26.60px;background:#222;border:1px solid #1c1c1c;border-radius:5px"></div>
<div class="a" style="left:1076.07px;top:389.06px;width:30.70px;height:26.60px;background:#c055dc;border:1px solid #1c1c1c;border-radius:5px"></div>
<div class="a" style="left:10.00px;top:391.06px;width:43.00px;height:22.00px;background:#2b2b2b;border-radius:3px"></div>
<div class="t" style="left:31.50px;top:401.16px;font-weight:bold;font-size:13px;color:#f2f2f2"><span>Frmnt</span></div>
<div class="a" style="left:1111.20px;top:393.36px;width:14.10px;height:18.20px;border:1px solid #6a6a6a;background:#c3c3c3"></div>
<div class="t" style="left:1118.30px;top:402.46px;font-weight:bold;font-size:11px;color:#111"><span>R</span></div>
<div class="a" style="left:1127.60px;top:393.36px;width:14.20px;height:18.20px;border:1px solid #6a6a6a;background:#c3c3c3"></div>
<div class="t" style="left:1134.70px;top:402.46px;font-weight:bold;font-size:11px;color:#111"><span>C</span></div>
<div class="a" style="left:1146.20px;top:391.06px;width:42.80px;height:21.60px;background:#2b2b2b;border-radius:3px"></div>
<div class="t" style="left:1167.60px;top:401.16px;font-weight:bold;font-size:13px;color:#f2f2f2"><span>Frmnt</span></div>
<div class="a" style="left:57.10px;top:418.09px;width:30.70px;height:26.60px;background:#222;border:1px solid #1c1c1c;border-radius:5px"></div>
<div class="a" style="left:89.97px;top:418.09px;width:30.70px;height:26.60px;background:#f27580;border:1px solid #1c1c1c;border-radius:5px"></div>
<div class="a" style="left:122.84px;top:418.09px;width:30.70px;height:26.60px;background:#222;border:1px solid #1c1c1c;border-radius:5px"></div>
<div class="a" style="left:155.71px;top:418.09px;width:30.70px;height:26.60px;background:#222;border:1px solid #1c1c1c;border-radius:5px"></div>
<div class="a" style="left:188.58px;top:418.09px;width:30.70px;height:26.60px;background:#222;border:1px solid #1c1c1c;border-radius:5px"></div>
<div class="a" style="left:221.45px;top:418.09px;width:30.70px;height:26.60px;background:#222;border:1px solid #1c1c1c;border-radius:5px"></div>
<div class="a" style="left:254.32px;top:418.09px;width:30.70px;height:26.60px;background:#222;border:1px solid #1c1c1c;border-radius:5px"></div>
<div class="a" style="left:287.19px;top:418.09px;width:30.70px;height:26.60px;background:#222;border:1px solid #1c1c1c;border-radius:5px"></div>
<div class="a" style="left:320.06px;top:418.09px;width:30.70px;height:26.60px;background:#222;border:1px solid #1c1c1c;border-radius:5px"></div>
<div class="a" style="left:352.93px;top:418.09px;width:30.70px;height:26.60px;background:#f27580;border:1px solid #1c1c1c;border-radius:5px"></div>
<div class="a" style="left:385.80px;top:418.09px;width:30.70px;height:26.60px;background:#222;border:1px solid #1c1c1c;border-radius:5px"></div>
<div class="a" style="left:418.67px;top:418.09px;width:30.70px;height:26.60px;background:#222;border:1px solid #1c1c1c;border-radius:5px"></div>
<div class="a" style="left:451.54px;top:418.09px;width:30.70px;height:26.60px;background:#222;border:1px solid #1c1c1c;border-radius:5px"></div>
<div class="a" style="left:484.41px;top:418.09px;width:30.70px;height:26.60px;background:#222;border:1px solid #1c1c1c;border-radius:5px"></div>
<div class="a" style="left:517.28px;top:418.09px;width:30.70px;height:26.60px;background:#222;border:1px solid #1c1c1c;border-radius:5px"></div>
<div class="a" style="left:550.15px;top:418.09px;width:30.70px;height:26.60px;background:#222;border:1px solid #1c1c1c;border-radius:5px"></div>
<div class="a" style="left:583.02px;top:418.09px;width:30.70px;height:26.60px;background:#222;border:1px solid #1c1c1c;border-radius:5px"></div>
<div class="a" style="left:615.89px;top:418.09px;width:30.70px;height:26.60px;background:#f27580;border:1px solid #1c1c1c;border-radius:5px"></div>
<div class="a" style="left:648.76px;top:418.09px;width:30.70px;height:26.60px;background:#222;border:1px solid #1c1c1c;border-radius:5px"></div>
<div class="a" style="left:681.63px;top:418.09px;width:30.70px;height:26.60px;background:#222;border:1px solid #1c1c1c;border-radius:5px"></div>
<div class="a" style="left:714.50px;top:418.09px;width:30.70px;height:26.60px;background:#222;border:1px solid #1c1c1c;border-radius:5px"></div>
<div class="a" style="left:747.37px;top:418.09px;width:30.70px;height:26.60px;background:#222;border:1px solid #1c1c1c;border-radius:5px"></div>
<div class="a" style="left:780.24px;top:418.09px;width:30.70px;height:26.60px;background:#222;border:1px solid #1c1c1c;border-radius:5px"></div>
<div class="a" style="left:813.11px;top:418.09px;width:30.70px;height:26.60px;background:#222;border:1px solid #1c1c1c;border-radius:5px"></div>
<div class="a" style="left:845.98px;top:418.09px;width:30.70px;height:26.60px;background:#222;border:1px solid #1c1c1c;border-radius:5px"></div>
<div class="a" style="left:878.85px;top:418.09px;width:30.70px;height:26.60px;background:#f27580;border:1px solid #1c1c1c;border-radius:5px"></div>
<div class="a" style="left:911.72px;top:418.09px;width:30.70px;height:26.60px;background:#222;border:1px solid #1c1c1c;border-radius:5px"></div>
<div class="a" style="left:944.59px;top:418.09px;width:30.70px;height:26.60px;background:#222;border:1px solid #1c1c1c;border-radius:5px"></div>
<div class="a" style="left:977.46px;top:418.09px;width:30.70px;height:26.60px;background:#222;border:1px solid #1c1c1c;border-radius:5px"></div>
<div class="a" style="left:1010.33px;top:418.09px;width:30.70px;height:26.60px;background:#222;border:1px solid #1c1c1c;border-radius:5px"></div>
<div class="a" style="left:1043.20px;top:418.09px;width:30.70px;height:26.60px;background:#222;border:1px solid #1c1c1c;border-radius:5px"></div>
<div class="a" style="left:1076.07px;top:418.09px;width:30.70px;height:26.60px;background:#222;border:1px solid #1c1c1c;border-radius:5px"></div>
<div class="a" style="left:10.00px;top:420.09px;width:43.00px;height:22.00px;background:#2b2b2b;border-radius:3px"></div>
<div class="t" style="left:31.50px;top:430.19px;font-weight:bold;font-size:13px;color:#f2f2f2"><span>Lofi</span></div>
<div class="a" style="left:1111.20px;top:422.39px;width:14.10px;height:18.20px;border:1px solid #6a6a6a;background:#c3c3c3"></div>
<div class="t" style="left:1118.30px;top:431.49px;font-weight:bold;font-size:11px;color:#111"><span>R</span></div>
<div class="a" style="left:1127.60px;top:422.39px;width:14.20px;height:18.20px;border:1px solid #6a6a6a;background:#c3c3c3"></div>
<div class="t" style="left:1134.70px;top:431.49px;font-weight:bold;font-size:11px;color:#111"><span>C</span></div>
<div class="a" style="left:1146.20px;top:420.09px;width:42.80px;height:21.60px;background:#2b2b2b;border-radius:3px"></div>
<div class="t" style="left:1167.60px;top:430.19px;font-weight:bold;font-size:13px;color:#f2f2f2"><span>Lofi</span></div>
<div class="a" style="left:57.10px;top:447.12px;width:30.70px;height:26.60px;background:#222;border:1px solid #1c1c1c;border-radius:5px"></div>
<div class="a" style="left:89.97px;top:447.12px;width:30.70px;height:26.60px;background:#222;border:1px solid #1c1c1c;border-radius:5px"></div>
<div class="a" style="left:122.84px;top:447.12px;width:30.70px;height:26.60px;background:#222;border:1px solid #1c1c1c;border-radius:5px"></div>
<div class="a" style="left:155.71px;top:447.12px;width:30.70px;height:26.60px;background:#f0a020;border:1px solid #1c1c1c;border-radius:5px"></div>
<div class="a" style="left:188.58px;top:447.12px;width:30.70px;height:26.60px;background:#222;border:1px solid #1c1c1c;border-radius:5px"></div>
<div class="a" style="left:221.45px;top:447.12px;width:30.70px;height:26.60px;background:#222;border:1px solid #1c1c1c;border-radius:5px"></div>
<div class="a" style="left:254.32px;top:447.12px;width:30.70px;height:26.60px;background:#f0a020;border:1px solid #1c1c1c;border-radius:5px"></div>
<div class="a" style="left:287.19px;top:447.12px;width:30.70px;height:26.60px;background:#f0a020;border:1px solid #1c1c1c;border-radius:5px"></div>
<div class="a" style="left:320.06px;top:447.12px;width:30.70px;height:26.60px;background:#222;border:1px solid #1c1c1c;border-radius:5px"></div>
<div class="a" style="left:352.93px;top:447.12px;width:30.70px;height:26.60px;background:#222;border:1px solid #1c1c1c;border-radius:5px"></div>
<div class="a" style="left:385.80px;top:447.12px;width:30.70px;height:26.60px;background:#222;border:1px solid #1c1c1c;border-radius:5px"></div>
<div class="a" style="left:418.67px;top:447.12px;width:30.70px;height:26.60px;background:#222;border:1px solid #1c1c1c;border-radius:5px"></div>
<div class="a" style="left:451.54px;top:447.12px;width:30.70px;height:26.60px;background:#222;border:1px solid #1c1c1c;border-radius:5px"></div>
<div class="a" style="left:484.41px;top:447.12px;width:30.70px;height:26.60px;background:#222;border:1px solid #1c1c1c;border-radius:5px"></div>
<div class="a" style="left:517.28px;top:447.12px;width:30.70px;height:26.60px;background:#f0a020;border:1px solid #1c1c1c;border-radius:5px"></div>
<div class="a" style="left:550.15px;top:447.12px;width:30.70px;height:26.60px;background:#f0a020;border:1px solid #1c1c1c;border-radius:5px"></div>
<div class="a" style="left:583.02px;top:447.12px;width:30.70px;height:26.60px;background:#222;border:1px solid #1c1c1c;border-radius:5px"></div>
<div class="a" style="left:615.89px;top:447.12px;width:30.70px;height:26.60px;background:#222;border:1px solid #1c1c1c;border-radius:5px"></div>
<div class="a" style="left:648.76px;top:447.12px;width:30.70px;height:26.60px;background:#222;border:1px solid #1c1c1c;border-radius:5px"></div>
<div class="a" style="left:681.63px;top:447.12px;width:30.70px;height:26.60px;background:#222;border:1px solid #1c1c1c;border-radius:5px"></div>
<div class="a" style="left:714.50px;top:447.12px;width:30.70px;height:26.60px;background:#222;border:1px solid #1c1c1c;border-radius:5px"></div>
<div class="a" style="left:747.37px;top:447.12px;width:30.70px;height:26.60px;background:#222;border:1px solid #1c1c1c;border-radius:5px"></div>
<div class="a" style="left:780.24px;top:447.12px;width:30.70px;height:26.60px;background:#f0a020;border:1px solid #1c1c1c;border-radius:5px"></div>
<div class="a" style="left:813.11px;top:447.12px;width:30.70px;height:26.60px;background:#f0a020;border:1px solid #1c1c1c;border-radius:5px"></div>
<div class="a" style="left:845.98px;top:447.12px;width:30.70px;height:26.60px;background:#222;border:1px solid #1c1c1c;border-radius:5px"></div>
<div class="a" style="left:878.85px;top:447.12px;width:30.70px;height:26.60px;background:#222;border:1px solid #1c1c1c;border-radius:5px"></div>
<div class="a" style="left:911.72px;top:447.12px;width:30.70px;height:26.60px;background:#222;border:1px solid #1c1c1c;border-radius:5px"></div>
<div class="a" style="left:944.59px;top:447.12px;width:30.70px;height:26.60px;background:#222;border:1px solid #1c1c1c;border-radius:5px"></div>
<div class="a" style="left:977.46px;top:447.12px;width:30.70px;height:26.60px;background:#222;border:1px solid #1c1c1c;border-radius:5px"></div>
<div class="a" style="left:1010.33px;top:447.12px;width:30.70px;height:26.60px;background:#222;border:1px solid #1c1c1c;border-radius:5px"></div>
<div class="a" style="left:1043.20px;top:447.12px;width:30.70px;height:26.60px;background:#f0a020;border:1px solid #1c1c1c;border-radius:5px"></div>
<div class="a" style="left:1076.07px;top:447.12px;width:30.70px;height:26.60px;background:#f0a020;border:1px solid #1c1c1c;border-radius:5px"></div>
<div class="a" style="left:10.00px;top:449.12px;width:43.00px;height:22.00px;background:#2b2b2b;border-radius:3px"></div>
<div class="t" style="left:31.50px;top:459.22px;font-weight:bold;font-size:13px;color:#f2f2f2"><span>Rpt</span></div>
<div class="a" style="left:1111.20px;top:451.42px;width:14.10px;height:18.20px;border:1px solid #6a6a6a;background:#c3c3c3"></div>
<div class="t" style="left:1118.30px;top:460.52px;font-weight:bold;font-size:11px;color:#111"><span>R</span></div>
<div class="a" style="left:1127.60px;top:451.42px;width:14.20px;height:18.20px;border:1px solid #6a6a6a;background:#c3c3c3"></div>
<div class="t" style="left:1134.70px;top:460.52px;font-weight:bold;font-size:11px;color:#111"><span>C</span></div>
<div class="a" style="left:1146.20px;top:449.12px;width:42.80px;height:21.60px;background:#2b2b2b;border-radius:3px"></div>
<div class="t" style="left:1167.60px;top:459.22px;font-weight:bold;font-size:13px;color:#f2f2f2"><span>Rpt</span></div>
<div class="a" style="left:57.10px;top:476.15px;width:30.70px;height:26.60px;background:#222;border:1px solid #1c1c1c;border-radius:5px"></div>
<div class="a" style="left:89.97px;top:476.15px;width:30.70px;height:26.60px;background:#f2e46e;border:1px solid #1c1c1c;border-radius:5px"></div>
<div class="a" style="left:122.84px;top:476.15px;width:30.70px;height:26.60px;background:#f2e46e;border:1px solid #1c1c1c;border-radius:5px"></div>
<div class="a" style="left:155.71px;top:476.15px;width:30.70px;height:26.60px;background:#222;border:1px solid #1c1c1c;border-radius:5px"></div>
<div class="a" style="left:188.58px;top:476.15px;width:30.70px;height:26.60px;background:#222;border:1px solid #1c1c1c;border-radius:5px"></div>
<div class="a" style="left:221.45px;top:476.15px;width:30.70px;height:26.60px;background:#f2e46e;border:1px solid #1c1c1c;border-radius:5px"></div>
<div class="a" style="left:254.32px;top:476.15px;width:30.70px;height:26.60px;background:#222;border:1px solid #1c1c1c;border-radius:5px"></div>
<div class="a" style="left:287.19px;top:476.15px;width:30.70px;height:26.60px;background:#222;border:1px solid #1c1c1c;border-radius:5px"></div>
<div class="a" style="left:320.06px;top:476.15px;width:30.70px;height:26.60px;background:#222;border:1px solid #1c1c1c;border-radius:5px"></div>
<div class="a" style="left:352.93px;top:476.15px;width:30.70px;height:26.60px;background:#f2e46e;border:1px solid #1c1c1c;border-radius:5px"></div>
<div class="a" style="left:385.80px;top:476.15px;width:30.70px;height:26.60px;background:#f2e46e;border:1px solid #1c1c1c;border-radius:5px"></div>
<div class="a" style="left:418.67px;top:476.15px;width:30.70px;height:26.60px;background:#222;border:1px solid #1c1c1c;border-radius:5px"></div>
<div class="a" style="left:451.54px;top:476.15px;width:30.70px;height:26.60px;background:#222;border:1px solid #1c1c1c;border-radius:5px"></div>
<div class="a" style="left:484.41px;top:476.15px;width:30.70px;height:26.60px;background:#f2e46e;border:1px solid #1c1c1c;border-radius:5px"></div>
<div class="a" style="left:517.28px;top:476.15px;width:30.70px;height:26.60px;background:#222;border:1px solid #1c1c1c;border-radius:5px"></div>
<div class="a" style="left:550.15px;top:476.15px;width:30.70px;height:26.60px;background:#222;border:1px solid #1c1c1c;border-radius:5px"></div>
<div class="a" style="left:583.02px;top:476.15px;width:30.70px;height:26.60px;background:#222;border:1px solid #1c1c1c;border-radius:5px"></div>
<div class="a" style="left:615.89px;top:476.15px;width:30.70px;height:26.60px;background:#f2e46e;border:1px solid #1c1c1c;border-radius:5px"></div>
<div class="a" style="left:648.76px;top:476.15px;width:30.70px;height:26.60px;background:#f2e46e;border:1px solid #1c1c1c;border-radius:5px"></div>
<div class="a" style="left:681.63px;top:476.15px;width:30.70px;height:26.60px;background:#222;border:1px solid #1c1c1c;border-radius:5px"></div>
<div class="a" style="left:714.50px;top:476.15px;width:30.70px;height:26.60px;background:#222;border:1px solid #1c1c1c;border-radius:5px"></div>
<div class="a" style="left:747.37px;top:476.15px;width:30.70px;height:26.60px;background:#f2e46e;border:1px solid #1c1c1c;border-radius:5px"></div>
<div class="a" style="left:780.24px;top:476.15px;width:30.70px;height:26.60px;background:#222;border:1px solid #1c1c1c;border-radius:5px"></div>
<div class="a" style="left:813.11px;top:476.15px;width:30.70px;height:26.60px;background:#222;border:1px solid #1c1c1c;border-radius:5px"></div>
<div class="a" style="left:845.98px;top:476.15px;width:30.70px;height:26.60px;background:#222;border:1px solid #1c1c1c;border-radius:5px"></div>
<div class="a" style="left:878.85px;top:476.15px;width:30.70px;height:26.60px;background:#f2e46e;border:1px solid #1c1c1c;border-radius:5px"></div>
<div class="a" style="left:911.72px;top:476.15px;width:30.70px;height:26.60px;background:#f2e46e;border:1px solid #1c1c1c;border-radius:5px"></div>
<div class="a" style="left:944.59px;top:476.15px;width:30.70px;height:26.60px;background:#222;border:1px solid #1c1c1c;border-radius:5px"></div>
<div class="a" style="left:977.46px;top:476.15px;width:30.70px;height:26.60px;background:#222;border:1px solid #1c1c1c;border-radius:5px"></div>
<div class="a" style="left:1010.33px;top:476.15px;width:30.70px;height:26.60px;background:#f2e46e;border:1px solid #1c1c1c;border-radius:5px"></div>
<div class="a" style="left:1043.20px;top:476.15px;width:30.70px;height:26.60px;background:#222;border:1px solid #1c1c1c;border-radius:5px"></div>
<div class="a" style="left:1076.07px;top:476.15px;width:30.70px;height:26.60px;background:#222;border:1px solid #1c1c1c;border-radius:5px"></div>
<div class="a" style="left:10.00px;top:478.15px;width:43.00px;height:22.00px;background:#2b2b2b;border-radius:3px"></div>
<div class="t" style="left:31.50px;top:488.25px;font-weight:bold;font-size:13px;color:#f2f2f2"><span>Rvrs</span></div>
<div class="a" style="left:1111.20px;top:480.45px;width:14.10px;height:18.20px;border:1px solid #6a6a6a;background:#c3c3c3"></div>
<div class="t" style="left:1118.30px;top:489.55px;font-weight:bold;font-size:11px;color:#111"><span>R</span></div>
<div class="a" style="left:1127.60px;top:480.45px;width:14.20px;height:18.20px;border:1px solid #6a6a6a;background:#c3c3c3"></div>
<div class="t" style="left:1134.70px;top:489.55px;font-weight:bold;font-size:11px;color:#111"><span>C</span></div>
<div class="a" style="left:1146.20px;top:478.15px;width:42.80px;height:21.60px;background:#2b2b2b;border-radius:3px"></div>
<div class="t" style="left:1167.60px;top:488.25px;font-weight:bold;font-size:13px;color:#f2f2f2"><span>Rvrs</span></div>
<div class="a" style="left:57.10px;top:505.18px;width:30.70px;height:26.60px;background:#222;border:1px solid #1c1c1c;border-radius:5px"></div>
<div class="a" style="left:89.97px;top:505.18px;width:30.70px;height:26.60px;background:#222;border:1px solid #1c1c1c;border-radius:5px"></div>
<div class="a" style="left:122.84px;top:505.18px;width:30.70px;height:26.60px;background:#222;border:1px solid #1c1c1c;border-radius:5px"></div>
<div class="a" style="left:155.71px;top:505.18px;width:30.70px;height:26.60px;background:#2ef5a0;border:1px solid #1c1c1c;border-radius:5px"></div>
<div class="a" style="left:188.58px;top:505.18px;width:30.70px;height:26.60px;background:#222;border:1px solid #1c1c1c;border-radius:5px"></div>
<div class="a" style="left:221.45px;top:505.18px;width:30.70px;height:26.60px;background:#222;border:1px solid #1c1c1c;border-radius:5px"></div>
<div class="a" style="left:254.32px;top:505.18px;width:30.70px;height:26.60px;background:#222;border:1px solid #1c1c1c;border-radius:5px"></div>
<div class="a" style="left:287.19px;top:505.18px;width:30.70px;height:26.60px;background:#222;border:1px solid #1c1c1c;border-radius:5px"></div>
<div class="a" style="left:320.06px;top:505.18px;width:30.70px;height:26.60px;background:#222;border:1px solid #1c1c1c;border-radius:5px"></div>
<div class="a" style="left:352.93px;top:505.18px;width:30.70px;height:26.60px;background:#222;border:1px solid #1c1c1c;border-radius:5px"></div>
<div class="a" style="left:385.80px;top:505.18px;width:30.70px;height:26.60px;background:#222;border:1px solid #1c1c1c;border-radius:5px"></div>
<div class="a" style="left:418.67px;top:505.18px;width:30.70px;height:26.60px;background:#222;border:1px solid #1c1c1c;border-radius:5px"></div>
<div class="a" style="left:451.54px;top:505.18px;width:30.70px;height:26.60px;background:#222;border:1px solid #1c1c1c;border-radius:5px"></div>
<div class="a" style="left:484.41px;top:505.18px;width:30.70px;height:26.60px;background:#222;border:1px solid #1c1c1c;border-radius:5px"></div>
<div class="a" style="left:517.28px;top:505.18px;width:30.70px;height:26.60px;background:#222;border:1px solid #1c1c1c;border-radius:5px"></div>
<div class="a" style="left:550.15px;top:505.18px;width:30.70px;height:26.60px;background:#2ef5a0;border:1px solid #1c1c1c;border-radius:5px"></div>
<div class="a" style="left:583.02px;top:505.18px;width:30.70px;height:26.60px;background:#222;border:1px solid #1c1c1c;border-radius:5px"></div>
<div class="a" style="left:615.89px;top:505.18px;width:30.70px;height:26.60px;background:#222;border:1px solid #1c1c1c;border-radius:5px"></div>
<div class="a" style="left:648.76px;top:505.18px;width:30.70px;height:26.60px;background:#2ef5a0;border:1px solid #1c1c1c;border-radius:5px"></div>
<div class="a" style="left:681.63px;top:505.18px;width:30.70px;height:26.60px;background:#2ef5a0;border:1px solid #1c1c1c;border-radius:5px"></div>
<div class="a" style="left:714.50px;top:505.18px;width:30.70px;height:26.60px;background:#222;border:1px solid #1c1c1c;border-radius:5px"></div>
<div class="a" style="left:747.37px;top:505.18px;width:30.70px;height:26.60px;background:#222;border:1px solid #1c1c1c;border-radius:5px"></div>
<div class="a" style="left:780.24px;top:505.18px;width:30.70px;height:26.60px;background:#222;border:1px solid #1c1c1c;border-radius:5px"></div>
<div class="a" style="left:813.11px;top:505.18px;width:30.70px;height:26.60px;background:#222;border:1px solid #1c1c1c;border-radius:5px"></div>
<div class="a" style="left:845.98px;top:505.18px;width:30.70px;height:26.60px;background:#222;border:1px solid #1c1c1c;border-radius:5px"></div>
<div class="a" style="left:878.85px;top:505.18px;width:30.70px;height:26.60px;background:#222;border:1px solid #1c1c1c;border-radius:5px"></div>
<div class="a" style="left:911.72px;top:505.18px;width:30.70px;height:26.60px;background:#222;border:1px solid #1c1c1c;border-radius:5px"></div>
<div class="a" style="left:944.59px;top:505.18px;width:30.70px;height:26.60px;background:#222;border:1px solid #1c1c1c;border-radius:5px"></div>
<div class="a" style="left:977.46px;top:505.18px;width:30.70px;height:26.60px;background:#222;border:1px solid #1c1c1c;border-radius:5px"></div>
<div class="a" style="left:1010.33px;top:505.18px;width:30.70px;height:26.60px;background:#222;border:1px solid #1c1c1c;border-radius:5px"></div>
<div class="a" style="left:1043.20px;top:505.18px;width:30.70px;height:26.60px;background:#222;border:1px solid #1c1c1c;border-radius:5px"></div>
<div class="a" style="left:1076.07px;top:505.18px;width:30.70px;height:26.60px;background:#222;border:1px solid #1c1c1c;border-radius:5px"></div>
<div class="a" style="left:10.00px;top:507.18px;width:43.00px;height:22.00px;background:#2b2b2b;border-radius:3px"></div>
<div class="t" style="left:31.50px;top:517.28px;font-weight:bold;font-size:13px;color:#f2f2f2"><span>Delay</span></div>
<div class="a" style="left:1111.20px;top:509.48px;width:14.10px;height:18.20px;border:1px solid #6a6a6a;background:#c3c3c3"></div>
<div class="t" style="left:1118.30px;top:518.58px;font-weight:bold;font-size:11px;color:#111"><span>R</span></div>
<div class="a" style="left:1127.60px;top:509.48px;width:14.20px;height:18.20px;border:1px solid #6a6a6a;background:#c3c3c3"></div>
<div class="t" style="left:1134.70px;top:518.58px;font-weight:bold;font-size:11px;color:#111"><span>C</span></div>
<div class="a" style="left:1146.20px;top:507.18px;width:42.80px;height:21.60px;background:#2b2b2b;border-radius:3px"></div>
<div class="t" style="left:1167.60px;top:517.28px;font-weight:bold;font-size:13px;color:#f2f2f2"><span>Delay</span></div>
<div class="a" style="left:57.10px;top:534.21px;width:30.70px;height:26.60px;background:#222;border:1px solid #1c1c1c;border-radius:5px"></div>
<div class="a" style="left:89.97px;top:534.21px;width:30.70px;height:26.60px;background:#222;border:1px solid #1c1c1c;border-radius:5px"></div>
<div class="a" style="left:122.84px;top:534.21px;width:30.70px;height:26.60px;background:#222;border:1px solid #1c1c1c;border-radius:5px"></div>
<div class="a" style="left:155.71px;top:534.21px;width:30.70px;height:26.60px;background:#222;border:1px solid #1c1c1c;border-radius:5px"></div>
<div class="a" style="left:188.58px;top:534.21px;width:30.70px;height:26.60px;background:#6cd43a;border:1px solid #1c1c1c;border-radius:5px"></div>
<div class="a" style="left:221.45px;top:534.21px;width:30.70px;height:26.60px;background:#6cd43a;border:1px solid #1c1c1c;border-radius:5px"></div>
<div class="a" style="left:254.32px;top:534.21px;width:30.70px;height:26.60px;background:#6cd43a;border:1px solid #1c1c1c;border-radius:5px"></div>
<div class="a" style="left:287.19px;top:534.21px;width:30.70px;height:26.60px;background:#222;border:1px solid #1c1c1c;border-radius:5px"></div>
<div class="a" style="left:320.06px;top:534.21px;width:30.70px;height:26.60px;background:#222;border:1px solid #1c1c1c;border-radius:5px"></div>
<div class="a" style="left:352.93px;top:534.21px;width:30.70px;height:26.60px;background:#222;border:1px solid #1c1c1c;border-radius:5px"></div>
<div class="a" style="left:385.80px;top:534.21px;width:30.70px;height:26.60px;background:#222;border:1px solid #1c1c1c;border-radius:5px"></div>
<div class="a" style="left:418.67px;top:534.21px;width:30.70px;height:26.60px;background:#222;border:1px solid #1c1c1c;border-radius:5px"></div>
<div class="a" style="left:451.54px;top:534.21px;width:30.70px;height:26.60px;background:#6cd43a;border:1px solid #1c1c1c;border-radius:5px"></div>
<div class="a" style="left:484.41px;top:534.21px;width:30.70px;height:26.60px;background:#6cd43a;border:1px solid #1c1c1c;border-radius:5px"></div>
<div class="a" style="left:517.28px;top:534.21px;width:30.70px;height:26.60px;background:#6cd43a;border:1px solid #1c1c1c;border-radius:5px"></div>
<div class="a" style="left:550.15px;top:534.21px;width:30.70px;height:26.60px;background:#222;border:1px solid #1c1c1c;border-radius:5px"></div>
<div class="a" style="left:583.02px;top:534.21px;width:30.70px;height:26.60px;background:#6cd43a;border:1px solid #1c1c1c;border-radius:5px"></div>
<div class="a" style="left:615.89px;top:534.21px;width:30.70px;height:26.60px;background:#222;border:1px solid #1c1c1c;border-radius:5px"></div>
<div class="a" style="left:648.76px;top:534.21px;width:30.70px;height:26.60px;background:#222;border:1px solid #1c1c1c;border-radius:5px"></div>
<div class="a" style="left:681.63px;top:534.21px;width:30.70px;height:26.60px;background:#222;border:1px solid #1c1c1c;border-radius:5px"></div>
<div class="a" style="left:714.50px;top:534.21px;width:30.70px;height:26.60px;background:#6cd43a;border:1px solid #1c1c1c;border-radius:5px"></div>
<div class="a" style="left:747.37px;top:534.21px;width:30.70px;height:26.60px;background:#6cd43a;border:1px solid #1c1c1c;border-radius:5px"></div>
<div class="a" style="left:780.24px;top:534.21px;width:30.70px;height:26.60px;background:#6cd43a;border:1px solid #1c1c1c;border-radius:5px"></div>
<div class="a" style="left:813.11px;top:534.21px;width:30.70px;height:26.60px;background:#222;border:1px solid #1c1c1c;border-radius:5px"></div>
<div class="a" style="left:845.98px;top:534.21px;width:30.70px;height:26.60px;background:#222;border:1px solid #1c1c1c;border-radius:5px"></div>
<div class="a" style="left:878.85px;top:534.21px;width:30.70px;height:26.60px;background:#222;border:1px solid #1c1c1c;border-radius:5px"></div>
<div class="a" style="left:911.72px;top:534.21px;width:30.70px;height:26.60px;background:#222;border:1px solid #1c1c1c;border-radius:5px"></div>
<div class="a" style="left:944.59px;top:534.21px;width:30.70px;height:26.60px;background:#222;border:1px solid #1c1c1c;border-radius:5px"></div>
<div class="a" style="left:977.46px;top:534.21px;width:30.70px;height:26.60px;background:#6cd43a;border:1px solid #1c1c1c;border-radius:5px"></div>
<div class="a" style="left:1010.33px;top:534.21px;width:30.70px;height:26.60px;background:#6cd43a;border:1px solid #1c1c1c;border-radius:5px"></div>
<div class="a" style="left:1043.20px;top:534.21px;width:30.70px;height:26.60px;background:#6cd43a;border:1px solid #1c1c1c;border-radius:5px"></div>
<div class="a" style="left:1076.07px;top:534.21px;width:30.70px;height:26.60px;background:#222;border:1px solid #1c1c1c;border-radius:5px"></div>
<div class="a" style="left:10.00px;top:536.21px;width:43.00px;height:22.00px;background:#2b2b2b;border-radius:3px"></div>
<div class="t" style="left:31.50px;top:546.31px;font-weight:bold;font-size:13px;color:#f2f2f2"><span>Rvrb</span></div>
<div class="a" style="left:1111.20px;top:538.51px;width:14.10px;height:18.20px;border:1px solid #6a6a6a;background:#c3c3c3"></div>
<div class="t" style="left:1118.30px;top:547.61px;font-weight:bold;font-size:11px;color:#111"><span>R</span></div>
<div class="a" style="left:1127.60px;top:538.51px;width:14.20px;height:18.20px;border:1px solid #6a6a6a;background:#c3c3c3"></div>
<div class="t" style="left:1134.70px;top:547.61px;font-weight:bold;font-size:11px;color:#111"><span>C</span></div>
<div class="a" style="left:1146.20px;top:536.21px;width:42.80px;height:21.60px;background:#2b2b2b;border-radius:3px"></div>
<div class="t" style="left:1167.60px;top:546.31px;font-weight:bold;font-size:13px;color:#f2f2f2"><span>Rvrb</span></div>
<div class="a" style="left:57.10px;top:563.24px;width:30.70px;height:26.60px;background:#222;border:1px solid #1c1c1c;border-radius:5px"></div>
<div class="a" style="left:89.97px;top:563.24px;width:30.70px;height:26.60px;background:#b4b4b4;border:1px solid #1c1c1c;border-radius:5px"></div>
<div class="a" style="left:122.84px;top:563.24px;width:30.70px;height:26.60px;background:#222;border:1px solid #1c1c1c;border-radius:5px"></div>
<div class="a" style="left:155.71px;top:563.24px;width:30.70px;height:26.60px;background:#222;border:1px solid #1c1c1c;border-radius:5px"></div>
<div class="a" style="left:188.58px;top:563.24px;width:30.70px;height:26.60px;background:#b4b4b4;border:1px solid #1c1c1c;border-radius:5px"></div>
<div class="a" style="left:221.45px;top:563.24px;width:30.70px;height:26.60px;background:#222;border:1px solid #1c1c1c;border-radius:5px"></div>
<div class="a" style="left:254.32px;top:563.24px;width:30.70px;height:26.60px;background:#222;border:1px solid #1c1c1c;border-radius:5px"></div>
<div class="a" style="left:287.19px;top:563.24px;width:30.70px;height:26.60px;background:#b4b4b4;border:1px solid #1c1c1c;border-radius:5px"></div>
<div class="a" style="left:320.06px;top:563.24px;width:30.70px;height:26.60px;background:#222;border:1px solid #1c1c1c;border-radius:5px"></div>
<div class="a" style="left:352.93px;top:563.24px;width:30.70px;height:26.60px;background:#b4b4b4;border:1px solid #1c1c1c;border-radius:5px"></div>
<div class="a" style="left:385.80px;top:563.24px;width:30.70px;height:26.60px;background:#222;border:1px solid #1c1c1c;border-radius:5px"></div>
<div class="a" style="left:418.67px;top:563.24px;width:30.70px;height:26.60px;background:#222;border:1px solid #1c1c1c;border-radius:5px"></div>
<div class="a" style="left:451.54px;top:563.24px;width:30.70px;height:26.60px;background:#b4b4b4;border:1px solid #1c1c1c;border-radius:5px"></div>
<div class="a" style="left:484.41px;top:563.24px;width:30.70px;height:26.60px;background:#222;border:1px solid #1c1c1c;border-radius:5px"></div>
<div class="a" style="left:517.28px;top:563.24px;width:30.70px;height:26.60px;background:#222;border:1px solid #1c1c1c;border-radius:5px"></div>
<div class="a" style="left:550.15px;top:563.24px;width:30.70px;height:26.60px;background:#b4b4b4;border:1px solid #1c1c1c;border-radius:5px"></div>
<div class="a" style="left:583.02px;top:563.24px;width:30.70px;height:26.60px;background:#222;border:1px solid #1c1c1c;border-radius:5px"></div>
<div class="a" style="left:615.89px;top:563.24px;width:30.70px;height:26.60px;background:#b4b4b4;border:1px solid #1c1c1c;border-radius:5px"></div>
<div class="a" style="left:648.76px;top:563.24px;width:30.70px;height:26.60px;background:#222;border:1px solid #1c1c1c;border-radius:5px"></div>
<div class="a" style="left:681.63px;top:563.24px;width:30.70px;height:26.60px;background:#222;border:1px solid #1c1c1c;border-radius:5px"></div>
<div class="a" style="left:714.50px;top:563.24px;width:30.70px;height:26.60px;background:#b4b4b4;border:1px solid #1c1c1c;border-radius:5px"></div>
<div class="a" style="left:747.37px;top:563.24px;width:30.70px;height:26.60px;background:#222;border:1px solid #1c1c1c;border-radius:5px"></div>
<div class="a" style="left:780.24px;top:563.24px;width:30.70px;height:26.60px;background:#222;border:1px solid #1c1c1c;border-radius:5px"></div>
<div class="a" style="left:813.11px;top:563.24px;width:30.70px;height:26.60px;background:#b4b4b4;border:1px solid #1c1c1c;border-radius:5px"></div>
<div class="a" style="left:845.98px;top:563.24px;width:30.70px;height:26.60px;background:#222;border:1px solid #1c1c1c;border-radius:5px"></div>
<div class="a" style="left:878.85px;top:563.24px;width:30.70px;height:26.60px;background:#b4b4b4;border:1px solid #1c1c1c;border-radius:5px"></div>
<div class="a" style="left:911.72px;top:563.24px;width:30.70px;height:26.60px;background:#222;border:1px solid #1c1c1c;border-radius:5px"></div>
<div class="a" style="left:944.59px;top:563.24px;width:30.70px;height:26.60px;background:#222;border:1px solid #1c1c1c;border-radius:5px"></div>
<div class="a" style="left:977.46px;top:563.24px;width:30.70px;height:26.60px;background:#b4b4b4;border:1px solid #1c1c1c;border-radius:5px"></div>
<div class="a" style="left:1010.33px;top:563.24px;width:30.70px;height:26.60px;background:#222;border:1px solid #1c1c1c;border-radius:5px"></div>
<div class="a" style="left:1043.20px;top:563.24px;width:30.70px;height:26.60px;background:#222;border:1px solid #1c1c1c;border-radius:5px"></div>
<div class="a" style="left:1076.07px;top:563.24px;width:30.70px;height:26.60px;background:#b4b4b4;border:1px solid #1c1c1c;border-radius:5px"></div>
<div class="a" style="left:10.00px;top:565.24px;width:43.00px;height:22.00px;background:#2b2b2b;border-radius:3px"></div>
<div class="t" style="left:31.50px;top:575.34px;font-weight:bold;font-size:13px;color:#f2f2f2"><span>LFO</span></div>
<div class="a" style="left:1111.20px;top:567.54px;width:14.10px;height:18.20px;border:1px solid #6a6a6a;background:#c3c3c3"></div>
<div class="t" style="left:1118.30px;top:576.64px;font-weight:bold;font-size:11px;color:#111"><span>R</span></div>
<div class="a" style="left:1127.60px;top:567.54px;width:14.20px;height:18.20px;border:1px solid #6a6a6a;background:#c3c3c3"></div>
<div class="t" style="left:1134.70px;top:576.64px;font-weight:bold;font-size:11px;color:#111"><span>C</span></div>
<div class="a" style="left:1146.20px;top:565.24px;width:42.80px;height:21.60px;background:#2b2b2b;border-radius:3px"></div>
<div class="t" style="left:1167.60px;top:575.34px;font-weight:bold;font-size:13px;color:#f2f2f2"><span>LFO</span></div>
<div class="a" style="left:57.10px;top:592.27px;width:30.70px;height:26.60px;background:#dcdcdc;border:1px solid #1c1c1c;border-radius:5px"></div>
<div class="a" style="left:89.97px;top:592.27px;width:30.70px;height:26.60px;background:#222;border:1px solid #1c1c1c;border-radius:5px"></div>
<div class="a" style="left:122.84px;top:592.27px;width:30.70px;height:26.60px;background:#dcdcdc;border:1px solid #1c1c1c;border-radius:5px"></div>
<div class="a" style="left:155.71px;top:592.27px;width:30.70px;height:26.60px;background:#dcdcdc;border:1px solid #1c1c1c;border-radius:5px"></div>
<div class="a" style="left:188.58px;top:592.27px;width:30.70px;height:26.60px;background:#222;border:1px solid #1c1c1c;border-radius:5px"></div>
<div class="a" style="left:221.45px;top:592.27px;width:30.70px;height:26.60px;background:#222;border:1px solid #1c1c1c;border-radius:5px"></div>
<div class="a" style="left:254.32px;top:592.27px;width:30.70px;height:26.60px;background:#dcdcdc;border:1px solid #1c1c1c;border-radius:5px"></div>
<div class="a" style="left:287.19px;top:592.27px;width:30.70px;height:26.60px;background:#dcdcdc;border:1px solid #1c1c1c;border-radius:5px"></div>
<div class="a" style="left:320.06px;top:592.27px;width:30.70px;height:26.60px;background:#dcdcdc;border:1px solid #1c1c1c;border-radius:5px"></div>
<div class="a" style="left:352.93px;top:592.27px;width:30.70px;height:26.60px;background:#222;border:1px solid #1c1c1c;border-radius:5px"></div>
<div class="a" style="left:385.80px;top:592.27px;width:30.70px;height:26.60px;background:#222;border:1px solid #1c1c1c;border-radius:5px"></div>
<div class="a" style="left:418.67px;top:592.27px;width:30.70px;height:26.60px;background:#dcdcdc;border:1px solid #1c1c1c;border-radius:5px"></div>
<div class="a" style="left:451.54px;top:592.27px;width:30.70px;height:26.60px;background:#222;border:1px solid #1c1c1c;border-radius:5px"></div>
<div class="a" style="left:484.41px;top:592.27px;width:30.70px;height:26.60px;background:#222;border:1px solid #1c1c1c;border-radius:5px"></div>
<div class="a" style="left:517.28px;top:592.27px;width:30.70px;height:26.60px;background:#dcdcdc;border:1px solid #1c1c1c;border-radius:5px"></div>
<div class="a" style="left:550.15px;top:592.27px;width:30.70px;height:26.60px;background:#dcdcdc;border:1px solid #1c1c1c;border-radius:5px"></div>
<div class="a" style="left:583.02px;top:592.27px;width:30.70px;height:26.60px;background:#dcdcdc;border:1px solid #1c1c1c;border-radius:5px"></div>
<div class="a" style="left:615.89px;top:592.27px;width:30.70px;height:26.60px;background:#222;border:1px solid #1c1c1c;border-radius:5px"></div>
<div class="a" style="left:648.76px;top:592.27px;width:30.70px;height:26.60px;background:#222;border:1px solid #1c1c1c;border-radius:5px"></div>
<div class="a" style="left:681.63px;top:592.27px;width:30.70px;height:26.60px;background:#dcdcdc;border:1px solid #1c1c1c;border-radius:5px"></div>
<div class="a" style="left:714.50px;top:592.27px;width:30.70px;height:26.60px;background:#222;border:1px solid #1c1c1c;border-radius:5px"></div>
<div class="a" style="left:747.37px;top:592.27px;width:30.70px;height:26.60px;background:#222;border:1px solid #1c1c1c;border-radius:5px"></div>
<div class="a" style="left:780.24px;top:592.27px;width:30.70px;height:26.60px;background:#dcdcdc;border:1px solid #1c1c1c;border-radius:5px"></div>
<div class="a" style="left:813.11px;top:592.27px;width:30.70px;height:26.60px;background:#dcdcdc;border:1px solid #1c1c1c;border-radius:5px"></div>
<div class="a" style="left:845.98px;top:592.27px;width:30.70px;height:26.60px;background:#dcdcdc;border:1px solid #1c1c1c;border-radius:5px"></div>
<div class="a" style="left:878.85px;top:592.27px;width:30.70px;height:26.60px;background:#222;border:1px solid #1c1c1c;border-radius:5px"></div>
<div class="a" style="left:911.72px;top:592.27px;width:30.70px;height:26.60px;background:#222;border:1px solid #1c1c1c;border-radius:5px"></div>
<div class="a" style="left:944.59px;top:592.27px;width:30.70px;height:26.60px;background:#dcdcdc;border:1px solid #1c1c1c;border-radius:5px"></div>
<div class="a" style="left:977.46px;top:592.27px;width:30.70px;height:26.60px;background:#222;border:1px solid #1c1c1c;border-radius:5px"></div>
<div class="a" style="left:1010.33px;top:592.27px;width:30.70px;height:26.60px;background:#222;border:1px solid #1c1c1c;border-radius:5px"></div>
<div class="a" style="left:1043.20px;top:592.27px;width:30.70px;height:26.60px;background:#dcdcdc;border:1px solid #1c1c1c;border-radius:5px"></div>
<div class="a" style="left:1076.07px;top:592.27px;width:30.70px;height:26.60px;background:#dcdcdc;border:1px solid #1c1c1c;border-radius:5px"></div>
<div class="a" style="left:10.00px;top:594.27px;width:43.00px;height:22.00px;background:#2b2b2b;border-radius:3px"></div>
<div class="t" style="left:31.50px;top:604.37px;font-weight:bold;font-size:13px;color:#f2f2f2"><span>Env</span></div>
<div class="a" style="left:1111.20px;top:596.57px;width:14.10px;height:18.20px;border:1px solid #6a6a6a;background:#c3c3c3"></div>
<div class="t" style="left:1118.30px;top:605.67px;font-weight:bold;font-size:11px;color:#111"><span>R</span></div>
<div class="a" style="left:1127.60px;top:596.57px;width:14.20px;height:18.20px;border:1px solid #6a6a6a;background:#c3c3c3"></div>
<div class="t" style="left:1134.70px;top:605.67px;font-weight:bold;font-size:11px;color:#111"><span>C</span></div>
<div class="a" style="left:1146.20px;top:594.27px;width:42.80px;height:21.60px;background:#2b2b2b;border-radius:3px"></div>
<div class="t" style="left:1167.60px;top:604.37px;font-weight:bold;font-size:13px;color:#f2f2f2"><span>Env</span></div>
<div class="a" style="left:320.10px;top:330.10px;width:31.10px;height:290.00px;background:rgba(255,50,50,0.25)"></div>
<div class="a" style="left:55.70px;top:623.30px;width:13.80px;height:14.20px;border:1px solid #5e5e5e;background:#c3c3c3"></div>
<div class="t" style="left:62.60px;top:630.40px;font-weight:bold;font-size:10.5px;color:#111"><span>R</span></div>
<div class="a" style="left:71.80px;top:623.30px;width:13.90px;height:14.20px;border:1px solid #5e5e5e;background:#c3c3c3"></div>
<div class="t" style="left:78.75px;top:630.40px;font-weight:bold;font-size:10.5px;color:#111"><span>C</span></div>
<div class="a" style="left:55.70px;top:640.50px;width:30.00px;height:14.20px;border:1px solid #5e5e5e;background:#c3c3c3"></div>
<div class="t" style="left:70.70px;top:648.40px;font-weight:bold;font-size:10px;color:#111"><span>AllOn</span></div>
<div class="a" style="left:88.63px;top:623.30px;width:13.80px;height:14.20px;border:1px solid #5e5e5e;background:#c3c3c3"></div>
<div class="t" style="left:95.53px;top:630.40px;font-weight:bold;font-size:10.5px;color:#111"><span>R</span></div>
<div class="a" style="left:104.73px;top:623.30px;width:13.90px;height:14.20px;border:1px solid #5e5e5e;background:#c3c3c3"></div>
<div class="t" style="left:111.68px;top:630.40px;font-weight:bold;font-size:10.5px;color:#111"><span>C</span></div>
<div class="a" style="left:88.63px;top:640.50px;width:30.00px;height:14.20px;border:1px solid #5e5e5e;background:#c3c3c3"></div>
<div class="t" style="left:103.63px;top:648.40px;font-weight:bold;font-size:10px;color:#111"><span>AllOn</span></div>
<div class="a" style="left:121.56px;top:623.30px;width:13.80px;height:14.20px;border:1px solid #5e5e5e;background:#c3c3c3"></div>
<div class="t" style="left:128.46px;top:630.40px;font-weight:bold;font-size:10.5px;color:#111"><span>R</span></div>
<div class="a" style="left:137.66px;top:623.30px;width:13.90px;height:14.20px;border:1px solid #5e5e5e;background:#c3c3c3"></div>
<div class="t" style="left:144.61px;top:630.40px;font-weight:bold;font-size:10.5px;color:#111"><span>C</span></div>
<div class="a" style="left:121.56px;top:640.50px;width:30.00px;height:14.20px;border:1px solid #5e5e5e;background:#c3c3c3"></div>
<div class="t" style="left:136.56px;top:648.40px;font-weight:bold;font-size:10px;color:#111"><span>AllOn</span></div>
<div class="a" style="left:154.49px;top:623.30px;width:13.80px;height:14.20px;border:1px solid #5e5e5e;background:#c3c3c3"></div>
<div class="t" style="left:161.39px;top:630.40px;font-weight:bold;font-size:10.5px;color:#111"><span>R</span></div>
<div class="a" style="left:170.59px;top:623.30px;width:13.90px;height:14.20px;border:1px solid #5e5e5e;background:#c3c3c3"></div>
<div class="t" style="left:177.54px;top:630.40px;font-weight:bold;font-size:10.5px;color:#111"><span>C</span></div>
<div class="a" style="left:154.49px;top:640.50px;width:30.00px;height:14.20px;border:1px solid #5e5e5e;background:#c3c3c3"></div>
<div class="t" style="left:169.49px;top:648.40px;font-weight:bold;font-size:10px;color:#111"><span>AllOn</span></div>
<div class="a" style="left:187.42px;top:623.30px;width:13.80px;height:14.20px;border:1px solid #5e5e5e;background:#c3c3c3"></div>
<div class="t" style="left:194.32px;top:630.40px;font-weight:bold;font-size:10.5px;color:#111"><span>R</span></div>
<div class="a" style="left:203.52px;top:623.30px;width:13.90px;height:14.20px;border:1px solid #5e5e5e;background:#c3c3c3"></div>
<div class="t" style="left:210.47px;top:630.40px;font-weight:bold;font-size:10.5px;color:#111"><span>C</span></div>
<div class="a" style="left:187.42px;top:640.50px;width:30.00px;height:14.20px;border:1px solid #5e5e5e;background:#c3c3c3"></div>
<div class="t" style="left:202.42px;top:648.40px;font-weight:bold;font-size:10px;color:#111"><span>AllOn</span></div>
<div class="a" style="left:220.35px;top:623.30px;width:13.80px;height:14.20px;border:1px solid #5e5e5e;background:#c3c3c3"></div>
<div class="t" style="left:227.25px;top:630.40px;font-weight:bold;font-size:10.5px;color:#111"><span>R</span></div>
<div class="a" style="left:236.45px;top:623.30px;width:13.90px;height:14.20px;border:1px solid #5e5e5e;background:#c3c3c3"></div>
<div class="t" style="left:243.40px;top:630.40px;font-weight:bold;font-size:10.5px;color:#111"><span>C</span></div>
<div class="a" style="left:220.35px;top:640.50px;width:30.00px;height:14.20px;border:1px solid #5e5e5e;background:#c3c3c3"></div>
<div class="t" style="left:235.35px;top:648.40px;font-weight:bold;font-size:10px;color:#111"><span>AllOn</span></div>
<div class="a" style="left:253.28px;top:623.30px;width:13.80px;height:14.20px;border:1px solid #5e5e5e;background:#c3c3c3"></div>
<div class="t" style="left:260.18px;top:630.40px;font-weight:bold;font-size:10.5px;color:#111"><span>R</span></div>
<div class="a" style="left:269.38px;top:623.30px;width:13.90px;height:14.20px;border:1px solid #5e5e5e;background:#c3c3c3"></div>
<div class="t" style="left:276.33px;top:630.40px;font-weight:bold;font-size:10.5px;color:#111"><span>C</span></div>
<div class="a" style="left:253.28px;top:640.50px;width:30.00px;height:14.20px;border:1px solid #5e5e5e;background:#c3c3c3"></div>
<div class="t" style="left:268.28px;top:648.40px;font-weight:bold;font-size:10px;color:#111"><span>AllOn</span></div>
<div class="a" style="left:286.21px;top:623.30px;width:13.80px;height:14.20px;border:1px solid #5e5e5e;background:#c3c3c3"></div>
<div class="t" style="left:293.11px;top:630.40px;font-weight:bold;font-size:10.5px;color:#111"><span>R</span></div>
<div class="a" style="left:302.31px;top:623.30px;width:13.90px;height:14.20px;border:1px solid #5e5e5e;background:#c3c3c3"></div>
<div class="t" style="left:309.26px;top:630.40px;font-weight:bold;font-size:10.5px;color:#111"><span>C</span></div>
<div class="a" style="left:286.21px;top:640.50px;width:30.00px;height:14.20px;border:1px solid #5e5e5e;background:#c3c3c3"></div>
<div class="t" style="left:301.21px;top:648.40px;font-weight:bold;font-size:10px;color:#111"><span>AllOn</span></div>
<div class="a" style="left:319.14px;top:623.30px;width:13.80px;height:14.20px;border:1px solid #5e5e5e;background:#c3c3c3"></div>
<div class="t" style="left:326.04px;top:630.40px;font-weight:bold;font-size:10.5px;color:#111"><span>R</span></div>
<div class="a" style="left:335.24px;top:623.30px;width:13.90px;height:14.20px;border:1px solid #5e5e5e;background:#c3c3c3"></div>
<div class="t" style="left:342.19px;top:630.40px;font-weight:bold;font-size:10.5px;color:#111"><span>C</span></div>
<div class="a" style="left:319.14px;top:640.50px;width:30.00px;height:14.20px;border:1px solid #5e5e5e;background:#c3c3c3"></div>
<div class="t" style="left:334.14px;top:648.40px;font-weight:bold;font-size:10px;color:#111"><span>AllOn</span></div>
<div class="a" style="left:352.07px;top:623.30px;width:13.80px;height:14.20px;border:1px solid #5e5e5e;background:#c3c3c3"></div>
<div class="t" style="left:358.97px;top:630.40px;font-weight:bold;font-size:10.5px;color:#111"><span>R</span></div>
<div class="a" style="left:368.17px;top:623.30px;width:13.90px;height:14.20px;border:1px solid #5e5e5e;background:#c3c3c3"></div>
<div class="t" style="left:375.12px;top:630.40px;font-weight:bold;font-size:10.5px;color:#111"><span>C</span></div>
<div class="a" style="left:352.07px;top:640.50px;width:30.00px;height:14.20px;border:1px solid #5e5e5e;background:#c3c3c3"></div>
<div class="t" style="left:367.07px;top:648.40px;font-weight:bold;font-size:10px;color:#111"><span>AllOn</span></div>
<div class="a" style="left:385.00px;top:623.30px;width:13.80px;height:14.20px;border:1px solid #5e5e5e;background:#c3c3c3"></div>
<div class="t" style="left:391.90px;top:630.40px;font-weight:bold;font-size:10.5px;color:#111"><span>R</span></div>
<div class="a" style="left:401.10px;top:623.30px;width:13.90px;height:14.20px;border:1px solid #5e5e5e;background:#c3c3c3"></div>
<div class="t" style="left:408.05px;top:630.40px;font-weight:bold;font-size:10.5px;color:#111"><span>C</span></div>
<div class="a" style="left:385.00px;top:640.50px;width:30.00px;height:14.20px;border:1px solid #5e5e5e;background:#c3c3c3"></div>
<div class="t" style="left:400.00px;top:648.40px;font-weight:bold;font-size:10px;color:#111"><span>AllOn</span></div>
<div class="a" style="left:417.93px;top:623.30px;width:13.80px;height:14.20px;border:1px solid #5e5e5e;background:#c3c3c3"></div>
<div class="t" style="left:424.83px;top:630.40px;font-weight:bold;font-size:10.5px;color:#111"><span>R</span></div>
<div class="a" style="left:434.03px;top:623.30px;width:13.90px;height:14.20px;border:1px solid #5e5e5e;background:#c3c3c3"></div>
<div class="t" style="left:440.98px;top:630.40px;font-weight:bold;font-size:10.5px;color:#111"><span>C</span></div>
<div class="a" style="left:417.93px;top:640.50px;width:30.00px;height:14.20px;border:1px solid #5e5e5e;background:#c3c3c3"></div>
<div class="t" style="left:432.93px;top:648.40px;font-weight:bold;font-size:10px;color:#111"><span>AllOn</span></div>
<div class="a" style="left:450.86px;top:623.30px;width:13.80px;height:14.20px;border:1px solid #5e5e5e;background:#c3c3c3"></div>
<div class="t" style="left:457.76px;top:630.40px;font-weight:bold;font-size:10.5px;color:#111"><span>R</span></div>
<div class="a" style="left:466.96px;top:623.30px;width:13.90px;height:14.20px;border:1px solid #5e5e5e;background:#c3c3c3"></div>
<div class="t" style="left:473.91px;top:630.40px;font-weight:bold;font-size:10.5px;color:#111"><span>C</span></div>
<div class="a" style="left:450.86px;top:640.50px;width:30.00px;height:14.20px;border:1px solid #5e5e5e;background:#c3c3c3"></div>
<div class="t" style="left:465.86px;top:648.40px;font-weight:bold;font-size:10px;color:#111"><span>AllOn</span></div>
<div class="a" style="left:483.79px;top:623.30px;width:13.80px;height:14.20px;border:1px solid #5e5e5e;background:#c3c3c3"></div>
<div class="t" style="left:490.69px;top:630.40px;font-weight:bold;font-size:10.5px;color:#111"><span>R</span></div>
<div class="a" style="left:499.89px;top:623.30px;width:13.90px;height:14.20px;border:1px solid #5e5e5e;background:#c3c3c3"></div>
<div class="t" style="left:506.84px;top:630.40px;font-weight:bold;font-size:10.5px;color:#111"><span>C</span></div>
<div class="a" style="left:483.79px;top:640.50px;width:30.00px;height:14.20px;border:1px solid #5e5e5e;background:#c3c3c3"></div>
<div class="t" style="left:498.79px;top:648.40px;font-weight:bold;font-size:10px;color:#111"><span>AllOn</span></div>
<div class="a" style="left:516.72px;top:623.30px;width:13.80px;height:14.20px;border:1px solid #5e5e5e;background:#c3c3c3"></div>
<div class="t" style="left:523.62px;top:630.40px;font-weight:bold;font-size:10.5px;color:#111"><span>R</span></div>
<div class="a" style="left:532.82px;top:623.30px;width:13.90px;height:14.20px;border:1px solid #5e5e5e;background:#c3c3c3"></div>
<div class="t" style="left:539.77px;top:630.40px;font-weight:bold;font-size:10.5px;color:#111"><span>C</span></div>
<div class="a" style="left:516.72px;top:640.50px;width:30.00px;height:14.20px;border:1px solid #5e5e5e;background:#c3c3c3"></div>
<div class="t" style="left:531.72px;top:648.40px;font-weight:bold;font-size:10px;color:#111"><span>AllOn</span></div>
<div class="a" style="left:549.65px;top:623.30px;width:13.80px;height:14.20px;border:1px solid #5e5e5e;background:#c3c3c3"></div>
<div class="t" style="left:556.55px;top:630.40px;font-weight:bold;font-size:10.5px;color:#111"><span>R</span></div>
<div class="a" style="left:565.75px;top:623.30px;width:13.90px;height:14.20px;border:1px solid #5e5e5e;background:#c3c3c3"></div>
<div class="t" style="left:572.70px;top:630.40px;font-weight:bold;font-size:10.5px;color:#111"><span>C</span></div>
<div class="a" style="left:549.65px;top:640.50px;width:30.00px;height:14.20px;border:1px solid #5e5e5e;background:#c3c3c3"></div>
<div class="t" style="left:564.65px;top:648.40px;font-weight:bold;font-size:10px;color:#111"><span>AllOn</span></div>
<div class="a" style="left:582.58px;top:623.30px;width:13.80px;height:14.20px;border:1px solid #5e5e5e;background:#c3c3c3"></div>
<div class="t" style="left:589.48px;top:630.40px;font-weight:bold;font-size:10.5px;color:#111"><span>R</span></div>
<div class="a" style="left:598.68px;top:623.30px;width:13.90px;height:14.20px;border:1px solid #5e5e5e;background:#c3c3c3"></div>
<div class="t" style="left:605.63px;top:630.40px;font-weight:bold;font-size:10.5px;color:#111"><span>C</span></div>
<div class="a" style="left:582.58px;top:640.50px;width:30.00px;height:14.20px;border:1px solid #5e5e5e;background:#c3c3c3"></div>
<div class="t" style="left:597.58px;top:648.40px;font-weight:bold;font-size:10px;color:#111"><span>AllOn</span></div>
<div class="a" style="left:615.51px;top:623.30px;width:13.80px;height:14.20px;border:1px solid #5e5e5e;background:#c3c3c3"></div>
<div class="t" style="left:622.41px;top:630.40px;font-weight:bold;font-size:10.5px;color:#111"><span>R</span></div>
<div class="a" style="left:631.61px;top:623.30px;width:13.90px;height:14.20px;border:1px solid #5e5e5e;background:#c3c3c3"></div>
<div class="t" style="left:638.56px;top:630.40px;font-weight:bold;font-size:10.5px;color:#111"><span>C</span></div>
<div class="a" style="left:615.51px;top:640.50px;width:30.00px;height:14.20px;border:1px solid #5e5e5e;background:#c3c3c3"></div>
<div class="t" style="left:630.51px;top:648.40px;font-weight:bold;font-size:10px;color:#111"><span>AllOn</span></div>
<div class="a" style="left:648.44px;top:623.30px;width:13.80px;height:14.20px;border:1px solid #5e5e5e;background:#c3c3c3"></div>
<div class="t" style="left:655.34px;top:630.40px;font-weight:bold;font-size:10.5px;color:#111"><span>R</span></div>
<div class="a" style="left:664.54px;top:623.30px;width:13.90px;height:14.20px;border:1px solid #5e5e5e;background:#c3c3c3"></div>
<div class="t" style="left:671.49px;top:630.40px;font-weight:bold;font-size:10.5px;color:#111"><span>C</span></div>
<div class="a" style="left:648.44px;top:640.50px;width:30.00px;height:14.20px;border:1px solid #5e5e5e;background:#c3c3c3"></div>
<div class="t" style="left:663.44px;top:648.40px;font-weight:bold;font-size:10px;color:#111"><span>AllOn</span></div>
<div class="a" style="left:681.37px;top:623.30px;width:13.80px;height:14.20px;border:1px solid #5e5e5e;background:#c3c3c3"></div>
<div class="t" style="left:688.27px;top:630.40px;font-weight:bold;font-size:10.5px;color:#111"><span>R</span></div>
<div class="a" style="left:697.47px;top:623.30px;width:13.90px;height:14.20px;border:1px solid #5e5e5e;background:#c3c3c3"></div>
<div class="t" style="left:704.42px;top:630.40px;font-weight:bold;font-size:10.5px;color:#111"><span>C</span></div>
<div class="a" style="left:681.37px;top:640.50px;width:30.00px;height:14.20px;border:1px solid #5e5e5e;background:#c3c3c3"></div>
<div class="t" style="left:696.37px;top:648.40px;font-weight:bold;font-size:10px;color:#111"><span>AllOn</span></div>
<div class="a" style="left:714.30px;top:623.30px;width:13.80px;height:14.20px;border:1px solid #5e5e5e;background:#c3c3c3"></div>
<div class="t" style="left:721.20px;top:630.40px;font-weight:bold;font-size:10.5px;color:#111"><span>R</span></div>
<div class="a" style="left:730.40px;top:623.30px;width:13.90px;height:14.20px;border:1px solid #5e5e5e;background:#c3c3c3"></div>
<div class="t" style="left:737.35px;top:630.40px;font-weight:bold;font-size:10.5px;color:#111"><span>C</span></div>
<div class="a" style="left:714.30px;top:640.50px;width:30.00px;height:14.20px;border:1px solid #5e5e5e;background:#c3c3c3"></div>
<div class="t" style="left:729.30px;top:648.40px;font-weight:bold;font-size:10px;color:#111"><span>AllOn</span></div>
<div class="a" style="left:747.23px;top:623.30px;width:13.80px;height:14.20px;border:1px solid #5e5e5e;background:#c3c3c3"></div>
<div class="t" style="left:754.13px;top:630.40px;font-weight:bold;font-size:10.5px;color:#111"><span>R</span></div>
<div class="a" style="left:763.33px;top:623.30px;width:13.90px;height:14.20px;border:1px solid #5e5e5e;background:#c3c3c3"></div>
<div class="t" style="left:770.28px;top:630.40px;font-weight:bold;font-size:10.5px;color:#111"><span>C</span></div>
<div class="a" style="left:747.23px;top:640.50px;width:30.00px;height:14.20px;border:1px solid #5e5e5e;background:#c3c3c3"></div>
<div class="t" style="left:762.23px;top:648.40px;font-weight:bold;font-size:10px;color:#111"><span>AllOn</span></div>
<div class="a" style="left:780.16px;top:623.30px;width:13.80px;height:14.20px;border:1px solid #5e5e5e;background:#c3c3c3"></div>
<div class="t" style="left:787.06px;top:630.40px;font-weight:bold;font-size:10.5px;color:#111"><span>R</span></div>
<div class="a" style="left:796.26px;top:623.30px;width:13.90px;height:14.20px;border:1px solid #5e5e5e;background:#c3c3c3"></div>
<div class="t" style="left:803.21px;top:630.40px;font-weight:bold;font-size:10.5px;color:#111"><span>C</span></div>
<div class="a" style="left:780.16px;top:640.50px;width:30.00px;height:14.20px;border:1px solid #5e5e5e;background:#c3c3c3"></div>
<div class="t" style="left:795.16px;top:648.40px;font-weight:bold;font-size:10px;color:#111"><span>AllOn</span></div>
<div class="a" style="left:813.09px;top:623.30px;width:13.80px;height:14.20px;border:1px solid #5e5e5e;background:#c3c3c3"></div>
<div class="t" style="left:819.99px;top:630.40px;font-weight:bold;font-size:10.5px;color:#111"><span>R</span></div>
<div class="a" style="left:829.19px;top:623.30px;width:13.90px;height:14.20px;border:1px solid #5e5e5e;background:#c3c3c3"></div>
<div class="t" style="left:836.14px;top:630.40px;font-weight:bold;font-size:10.5px;color:#111"><span>C</span></div>
<div class="a" style="left:813.09px;top:640.50px;width:30.00px;height:14.20px;border:1px solid #5e5e5e;background:#c3c3c3"></div>
<div class="t" style="left:828.09px;top:648.40px;font-weight:bold;font-size:10px;color:#111"><span>AllOn</span></div>
<div class="a" style="left:846.02px;top:623.30px;width:13.80px;height:14.20px;border:1px solid #5e5e5e;background:#c3c3c3"></div>
<div class="t" style="left:852.92px;top:630.40px;font-weight:bold;font-size:10.5px;color:#111"><span>R</span></div>
<div class="a" style="left:862.12px;top:623.30px;width:13.90px;height:14.20px;border:1px solid #5e5e5e;background:#c3c3c3"></div>
<div class="t" style="left:869.07px;top:630.40px;font-weight:bold;font-size:10.5px;color:#111"><span>C</span></div>
<div class="a" style="left:846.02px;top:640.50px;width:30.00px;height:14.20px;border:1px solid #5e5e5e;background:#c3c3c3"></div>
<div class="t" style="left:861.02px;top:648.40px;font-weight:bold;font-size:10px;color:#111"><span>AllOn</span></div>
<div class="a" style="left:878.95px;top:623.30px;width:13.80px;height:14.20px;border:1px solid #5e5e5e;background:#c3c3c3"></div>
<div class="t" style="left:885.85px;top:630.40px;font-weight:bold;font-size:10.5px;color:#111"><span>R</span></div>
<div class="a" style="left:895.05px;top:623.30px;width:13.90px;height:14.20px;border:1px solid #5e5e5e;background:#c3c3c3"></div>
<div class="t" style="left:902.00px;top:630.40px;font-weight:bold;font-size:10.5px;color:#111"><span>C</span></div>
<div class="a" style="left:878.95px;top:640.50px;width:30.00px;height:14.20px;border:1px solid #5e5e5e;background:#c3c3c3"></div>
<div class="t" style="left:893.95px;top:648.40px;font-weight:bold;font-size:10px;color:#111"><span>AllOn</span></div>
<div class="a" style="left:911.88px;top:623.30px;width:13.80px;height:14.20px;border:1px solid #5e5e5e;background:#c3c3c3"></div>
<div class="t" style="left:918.78px;top:630.40px;font-weight:bold;font-size:10.5px;color:#111"><span>R</span></div>
<div class="a" style="left:927.98px;top:623.30px;width:13.90px;height:14.20px;border:1px solid #5e5e5e;background:#c3c3c3"></div>
<div class="t" style="left:934.93px;top:630.40px;font-weight:bold;font-size:10.5px;color:#111"><span>C</span></div>
<div class="a" style="left:911.88px;top:640.50px;width:30.00px;height:14.20px;border:1px solid #5e5e5e;background:#c3c3c3"></div>
<div class="t" style="left:926.88px;top:648.40px;font-weight:bold;font-size:10px;color:#111"><span>AllOn</span></div>
<div class="a" style="left:944.81px;top:623.30px;width:13.80px;height:14.20px;border:1px solid #5e5e5e;background:#c3c3c3"></div>
<div class="t" style="left:951.71px;top:630.40px;font-weight:bold;font-size:10.5px;color:#111"><span>R</span></div>
<div class="a" style="left:960.91px;top:623.30px;width:13.90px;height:14.20px;border:1px solid #5e5e5e;background:#c3c3c3"></div>
<div class="t" style="left:967.86px;top:630.40px;font-weight:bold;font-size:10.5px;color:#111"><span>C</span></div>
<div class="a" style="left:944.81px;top:640.50px;width:30.00px;height:14.20px;border:1px solid #5e5e5e;background:#c3c3c3"></div>
<div class="t" style="left:959.81px;top:648.40px;font-weight:bold;font-size:10px;color:#111"><span>AllOn</span></div>
<div class="a" style="left:977.74px;top:623.30px;width:13.80px;height:14.20px;border:1px solid #5e5e5e;background:#c3c3c3"></div>
<div class="t" style="left:984.64px;top:630.40px;font-weight:bold;font-size:10.5px;color:#111"><span>R</span></div>
<div class="a" style="left:993.84px;top:623.30px;width:13.90px;height:14.20px;border:1px solid #5e5e5e;background:#c3c3c3"></div>
<div class="t" style="left:1000.79px;top:630.40px;font-weight:bold;font-size:10.5px;color:#111"><span>C</span></div>
<div class="a" style="left:977.74px;top:640.50px;width:30.00px;height:14.20px;border:1px solid #5e5e5e;background:#c3c3c3"></div>
<div class="t" style="left:992.74px;top:648.40px;font-weight:bold;font-size:10px;color:#111"><span>AllOn</span></div>
<div class="a" style="left:1010.67px;top:623.30px;width:13.80px;height:14.20px;border:1px solid #5e5e5e;background:#c3c3c3"></div>
<div class="t" style="left:1017.57px;top:630.40px;font-weight:bold;font-size:10.5px;color:#111"><span>R</span></div>
<div class="a" style="left:1026.77px;top:623.30px;width:13.90px;height:14.20px;border:1px solid #5e5e5e;background:#c3c3c3"></div>
<div class="t" style="left:1033.72px;top:630.40px;font-weight:bold;font-size:10.5px;color:#111"><span>C</span></div>
<div class="a" style="left:1010.67px;top:640.50px;width:30.00px;height:14.20px;border:1px solid #5e5e5e;background:#c3c3c3"></div>
<div class="t" style="left:1025.67px;top:648.40px;font-weight:bold;font-size:10px;color:#111"><span>AllOn</span></div>
<div class="a" style="left:1043.60px;top:623.30px;width:13.80px;height:14.20px;border:1px solid #5e5e5e;background:#c3c3c3"></div>
<div class="t" style="left:1050.50px;top:630.40px;font-weight:bold;font-size:10.5px;color:#111"><span>R</span></div>
<div class="a" style="left:1059.70px;top:623.30px;width:13.90px;height:14.20px;border:1px solid #5e5e5e;background:#c3c3c3"></div>
<div class="t" style="left:1066.65px;top:630.40px;font-weight:bold;font-size:10.5px;color:#111"><span>C</span></div>
<div class="a" style="left:1043.60px;top:640.50px;width:30.00px;height:14.20px;border:1px solid #5e5e5e;background:#c3c3c3"></div>
<div class="t" style="left:1058.60px;top:648.40px;font-weight:bold;font-size:10px;color:#111"><span>AllOn</span></div>
<div class="a" style="left:1076.53px;top:623.30px;width:13.80px;height:14.20px;border:1px solid #5e5e5e;background:#c3c3c3"></div>
<div class="t" style="left:1083.43px;top:630.40px;font-weight:bold;font-size:10.5px;color:#111"><span>R</span></div>
<div class="a" style="left:1092.63px;top:623.30px;width:13.90px;height:14.20px;border:1px solid #5e5e5e;background:#c3c3c3"></div>
<div class="t" style="left:1099.58px;top:630.40px;font-weight:bold;font-size:10.5px;color:#111"><span>C</span></div>
<div class="a" style="left:1076.53px;top:640.50px;width:30.00px;height:14.20px;border:1px solid #5e5e5e;background:#c3c3c3"></div>
<div class="t" style="left:1091.53px;top:648.40px;font-weight:bold;font-size:10px;color:#111"><span>AllOn</span></div>
<div class="a" style="left:1111.30px;top:622.10px;width:78.30px;height:14.30px;border:1px solid #787878;border-bottom-color:#6a6a6a;border-radius:2px;background:#c3c3c3"></div>
<div class="t" style="left:1150.50px;top:629.20px;font-weight:bold;font-size:11px;color:#333"><span>Random All</span></div>
<div class="a" style="left:1111.30px;top:638.80px;width:78.30px;height:14.00px;border:1px solid #787878;border-bottom-color:#6a6a6a;border-radius:2px;background:#c3c3c3"></div>
<div class="t" style="left:1150.50px;top:645.80px;font-weight:bold;font-size:11px;color:#333"><span>Clear All</span></div>
<div class="t" style="left:35.30px;top:675.10px;font-size:13px;color:#3c3c3c;-webkit-text-stroke:0.35px #3c3c3c"><span>Save</span></div>
<div class="a" style="left:58.30px;top:665.70px;width:23.80px;height:21.90px;background:#333"></div>
<div class="t" style="left:70.20px;top:675.20px;font-size:15px;color:#eee"><span>1</span></div>
<div class="a" style="left:57.80px;top:680.20px;width:23.60px;height:8.60px;background:#a9a9a9;border:1px solid #d4d4d4;border-top-color:#b4b4b4;border-radius:1px 1px 3px 3px"></div>
<div class="a" style="left:87.20px;top:665.70px;width:23.80px;height:21.90px;background:#333"></div>
<div class="t" style="left:99.10px;top:675.20px;font-size:15px;color:#eee"><span>2</span></div>
<div class="a" style="left:86.70px;top:680.20px;width:23.60px;height:8.60px;background:#a9a9a9;border:1px solid #d4d4d4;border-top-color:#b4b4b4;border-radius:1px 1px 3px 3px"></div>
<div class="a" style="left:116.10px;top:665.70px;width:23.80px;height:21.90px;background:#333"></div>
<div class="t" style="left:128.00px;top:675.20px;font-size:15px;color:#eee"><span>3</span></div>
<div class="a" style="left:115.60px;top:680.20px;width:23.60px;height:8.60px;background:#a9a9a9;border:1px solid #d4d4d4;border-top-color:#b4b4b4;border-radius:1px 1px 3px 3px"></div>
<div class="a" style="left:145.00px;top:665.70px;width:23.80px;height:21.90px;background:#333"></div>
<div class="t" style="left:156.90px;top:675.20px;font-size:15px;color:#eee"><span>4</span></div>
<div class="a" style="left:144.50px;top:680.20px;width:23.60px;height:8.60px;background:#a9a9a9;border:1px solid #d4d4d4;border-top-color:#b4b4b4;border-radius:1px 1px 3px 3px"></div>
<div class="a" style="left:173.90px;top:665.70px;width:23.80px;height:21.90px;background:#333"></div>
<div class="t" style="left:185.80px;top:675.20px;font-size:15px;color:#eee"><span>5</span></div>
<div class="a" style="left:173.40px;top:680.20px;width:23.60px;height:8.60px;background:#a9a9a9;border:1px solid #d4d4d4;border-top-color:#b4b4b4;border-radius:1px 1px 3px 3px"></div>
<div class="a" style="left:202.80px;top:665.70px;width:23.80px;height:21.90px;background:#333"></div>
<div class="t" style="left:214.70px;top:675.20px;font-size:15px;color:#eee"><span>6</span></div>
<div class="a" style="left:231.70px;top:665.70px;width:23.80px;height:21.90px;background:#333"></div>
<div class="t" style="left:243.60px;top:675.20px;font-size:15px;color:#eee"><span>7</span></div>
<div class="a" style="left:260.60px;top:665.70px;width:23.80px;height:21.90px;background:#333"></div>
<div class="t" style="left:272.50px;top:675.20px;font-size:15px;color:#eee"><span>8</span></div>
<div class="t" style="left:323.40px;top:675.80px;font-size:13px;color:#3c3c3c;-webkit-text-stroke:0.35px #3c3c3c"><span>Load</span></div>
<div class="a" style="left:348.60px;top:665.40px;width:23.20px;height:21.90px;background:#333"></div>
<div class="t" style="left:360.20px;top:675.30px;font-size:15px;color:#eee;font-weight:normal"><span>1</span></div>
<div class="a" style="left:377.47px;top:665.40px;width:23.20px;height:21.90px;background:#333"></div>
<div class="t" style="left:389.07px;top:675.30px;font-size:15px;color:#eee;font-weight:normal"><span>2</span></div>
<div class="a" style="left:406.34px;top:665.40px;width:23.20px;height:21.90px;background:#333"></div>
<div class="t" style="left:417.94px;top:675.30px;font-size:15px;color:#eee;font-weight:normal"><span>3</span></div>
<div class="a" style="left:435.21px;top:665.40px;width:23.20px;height:21.90px;background:#333"></div>
<div class="t" style="left:446.81px;top:675.30px;font-size:15px;color:#eee;font-weight:normal"><span>4</span></div>
<div class="a" style="left:464.08px;top:665.40px;width:23.20px;height:21.90px;background:#fff"></div>
<div class="t" style="left:475.68px;top:675.30px;font-size:15px;color:#000;font-weight:bold"><span>5</span></div>
<div class="a" style="left:492.95px;top:665.40px;width:23.20px;height:21.90px;background:#333"></div>
<div class="t" style="left:504.55px;top:675.30px;font-size:15px;color:#eee;font-weight:normal"><span>6</span></div>
<div class="a" style="left:521.82px;top:665.40px;width:23.20px;height:21.90px;background:#333"></div>
<div class="t" style="left:533.42px;top:675.30px;font-size:15px;color:#eee;font-weight:normal"><span>7</span></div>
<div class="a" style="left:550.69px;top:665.40px;width:23.20px;height:21.90px;background:#333"></div>
<div class="t" style="left:562.29px;top:675.30px;font-size:15px;color:#eee;font-weight:normal"><span>8</span></div>
<div class="a" style="left:619.60px;top:664.70px;width:26.20px;height:22.50px;background:#333"></div>
<div class="t" style="left:632.70px;top:677.00px;font-weight:bold;font-size:16px;color:#eee"><span>&gt;</span></div>
<div class="a" style="left:651.20px;top:664.70px;width:26.40px;height:22.50px;background:#333"></div>
<div class="t" style="left:664.40px;top:677.00px;font-weight:bold;font-size:16px;color:#eee"><span>&lt;</span></div>
<div class="a" style="left:683.00px;top:664.70px;width:26.60px;height:22.50px;background:#f2f2f2"></div>
<div class="t" style="left:696.30px;top:677.00px;font-weight:bold;font-size:16px;color:#111"><span>&gt;&lt;</span></div>
<div class="a" style="left:715.00px;top:664.70px;width:26.40px;height:22.50px;background:#333"></div>
<div class="t" style="left:728.20px;top:677.00px;font-weight:bold;font-size:16px;color:#eee"><span>R</span></div>
<div class="t" style="left:765.90px;top:675.10px;font-size:13px;color:#3c3c3c;-webkit-text-stroke:0.4px #3c3c3c"><span>Size</span></div>
<div class="t" style="left:853.40px;top:675.10px;font-size:13px;color:#3c3c3c;-webkit-text-stroke:0.4px #3c3c3c"><span>Speed</span></div>
<div class="t" style="left:946.10px;top:676.10px;font-size:13.5px;color:#3c3c3c;-webkit-text-stroke:0.4px #3c3c3c"><span>Copy</span></div>
<div class="a" style="left:786.80px;top:666.40px;width:35.10px;height:19.30px;background:#333"></div>
<div class="tl" style="left:789.80px;top:676.00px;font-size:14px;color:#eee;-webkit-text-stroke:0.35px #eee"><span>12</span></div>
<svg width="1202" height="702"><path d="M809.9 674.5 L817.8 674.5 L813.85 680Z" fill="#ddd"/></svg>
<div class="a" style="left:882.20px;top:666.40px;width:34.60px;height:19.30px;background:#333"></div>
<div class="tl" style="left:885.20px;top:676.00px;font-size:14px;color:#eee;-webkit-text-stroke:0.35px #eee"><span>x1</span></div>
<svg width="1202" height="702"><path d="M904.8 674.5 L912.6999999999999 674.5 L908.75 680Z" fill="#ddd"/></svg>
<div class="a" style="left:971.00px;top:666.40px;width:34.70px;height:19.30px;background:#333"></div>
<div class="tl" style="left:974.00px;top:676.00px;font-size:14px;color:#eee;-webkit-text-stroke:0.35px #eee"><span>--</span></div>
<svg width="1202" height="702"><path d="M993.7 674.5 L1001.6 674.5 L997.6500000000001 680Z" fill="#ddd"/></svg>
<div class="a" style="left:1021.30px;top:666.40px;width:19.70px;height:19.30px;background:#333"></div>
<div class="t" style="left:1031.15px;top:676.00px;font-weight:bold;font-size:14px;color:#eee"><span>&lt;</span></div>
<div class="a" style="left:1045.40px;top:666.40px;width:19.60px;height:19.30px;background:#333"></div>
<div class="t" style="left:1055.20px;top:676.00px;font-weight:bold;font-size:14px;color:#eee"><span>&gt;</span></div></body></html>
